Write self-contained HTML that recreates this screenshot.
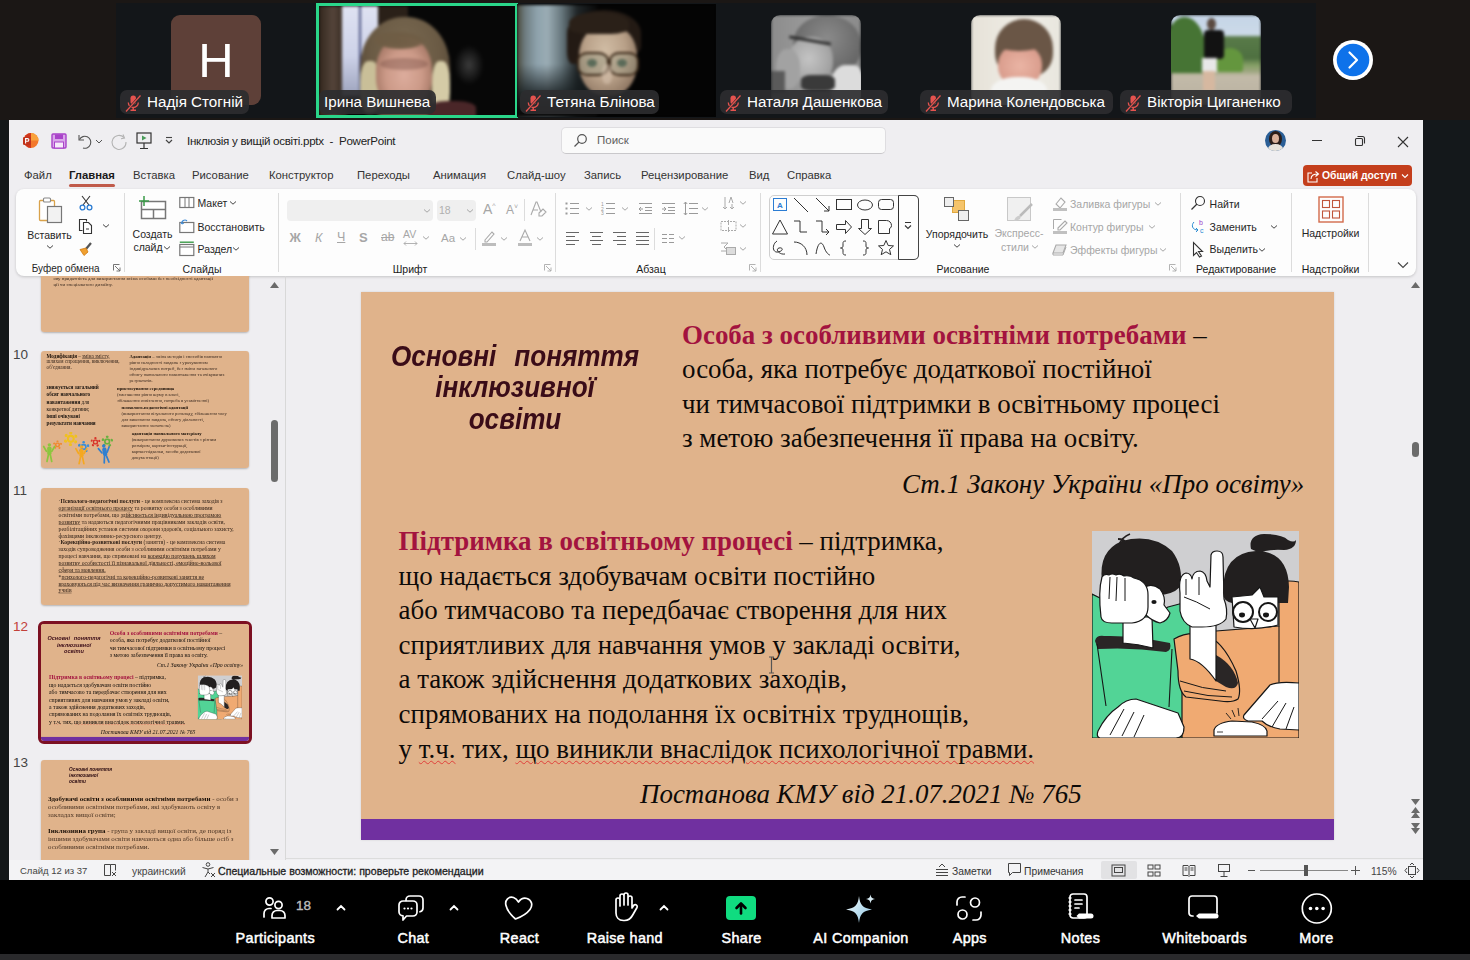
<!DOCTYPE html>
<html><head><meta charset="utf-8">
<style>
*{box-sizing:border-box;margin:0;padding:0}
html,body{width:1470px;height:960px;overflow:hidden;background:#1b1715;font-family:"Liberation Sans",sans-serif}
.a{position:absolute}
.sv{position:absolute;overflow:visible}
/* top strip */
#tiles{left:116px;top:3px;width:1200px;height:115px;background:#131619}
.tile{position:absolute;top:0;width:200px;height:115px}
.lbl{position:absolute;top:87px;height:24px;border-radius:7px;background:rgba(45,45,47,.92);color:#fff;font-size:15.2px;line-height:24px;white-space:nowrap}
.mic{position:absolute;left:4px;top:4px}
.av{position:absolute;top:12px;left:55px;width:90px;height:90px;border-radius:9px;overflow:hidden}
/* window */
#lside{left:0;top:120px;width:9px;height:760px;background:#131719}
#rside{left:1423px;top:120px;width:47px;height:760px;background:#14181b}
#win{left:9px;top:120px;width:1414px;height:760px;background:#efeef1;overflow:hidden}
.t12{font-size:12px;color:#262626;white-space:nowrap}
#zbar{left:0;top:880px;width:1470px;height:74px;background:#000}
#zstrip{left:0;top:954px;width:1470px;height:6px;background:#2a2a2c}
.zl{position:absolute;top:927px;color:#fff;font-size:14.5px;font-weight:bold;white-space:nowrap;letter-spacing:-0.1px}
.tab{top:49px;font-size:11.3px;color:#333}
.rt{white-space:nowrap;line-height:1.15}
</style></head>
<body>
<div id="tiles" class="a">
<div class="tile" style="left:0"><div class="av" style="background:#5e4038;color:#fff;font-size:49px;line-height:90px;text-align:center">H</div><div class="lbl" style="left:4px;width:129px"><svg class="mic" width="18" height="18" viewBox="0 0 18 18"><rect x="6.5" y="1.5" width="5.5" height="9" rx="2.7" fill="#e5534f"/><path d="M4.3 8.5a5 5 0 0 0 10 0" stroke="#e5534f" stroke-width="1.3" fill="none"/><path d="M9.2 13.5v2.5M6.5 16.3h5.5" stroke="#e5534f" stroke-width="1.4"/><path d="M2 17.5L16.5 1.5" stroke="#2d2d2f" stroke-width="2.6"/><path d="M2 17.5L16.5 1.5" stroke="#e5534f" stroke-width="1.2"/></svg><span style="position:absolute;left:27px">Надія Стогній</span></div></div>
<div class="tile" style="left:200px;width:202px;overflow:hidden"><div class="a" style="left:0px;top:0px;width:202px;height:115px;background:#070707"></div><div class="a" style="left:0;top:0;width:202px;height:115px;filter:blur(1.8px)"><div class="a" style="left:0px;top:0px;width:200px;height:115px;background:#070707"></div><div class="a" style="left:3px;top:3px;width:28px;height:110px;background:linear-gradient(90deg,#33271d,#54443a 50%,#2f241b)"></div><div class="a" style="left:26px;top:3px;width:40px;height:90px;background:linear-gradient(180deg,#dfe2f2 0,#cdd2e8 55%,#9ca2bc 100%)"></div><div class="a" style="left:43px;top:3px;width:1.5px;height:90px;background:#4a5282"></div><div class="a" style="left:62px;top:3px;width:30px;height:20px;background:#2a2018"></div><div class="a" style="left:138px;top:42px;width:30px;height:40px;border-radius:50%;background:radial-gradient(ellipse at 50% 50%,rgba(120,120,120,.45),transparent 70%)"></div><div class="a" style="left:44px;top:14px;width:90px;height:104px;border-radius:48% 48% 40% 40%;background:radial-gradient(ellipse at 50% 35%,#7a6a52 0,#6a5a44 55%,#5a4c3a 75%,rgba(90,76,58,0) 80%)"></div><div class="a" style="left:44px;top:58px;width:20px;height:52px;border-radius:40%;background:#c9bf98"></div><div class="a" style="left:116px;top:58px;width:18px;height:52px;border-radius:40%;background:#d4cba6"></div><div class="a" style="left:60px;top:34px;width:56px;height:70px;border-radius:46% 46% 40% 40%;background:radial-gradient(ellipse at 50% 55%,#dcac9c 0,#cc9a88 45%,#a87a68 75%,rgba(150,110,90,0) 90%)"></div><div class="a" style="left:58px;top:28px;width:52px;height:18px;border-radius:50%;background:radial-gradient(ellipse at 40% 60%,#6e5c44 0,rgba(110,92,68,.9) 55%,transparent 75%)"></div><div class="a" style="left:64px;top:55px;width:48px;height:12px;border-radius:50%;background:rgba(110,70,60,.35)"></div><div class="a" style="left:112px;top:98px;width:48px;height:17px;border-radius:40% 40% 0 0;background:#4a2628"></div></div><div class="a" style="left:0px;top:0px;width:202px;height:115px;border:3px solid #2ad68a"></div><div class="lbl" style="left:3px;width:117px"><span style="position:absolute;left:5px">Ірина Вишнева</span></div></div>
<div class="tile" style="left:401px;top:1px;width:199px;height:113px;overflow:hidden;background:#040404"><div class="a" style="left:0;top:0;width:199px;height:113px;filter:blur(1.6px)"><div class="a" style="left:0px;top:0px;width:199px;height:113px;background:#040404"></div><div class="a" style="left:0px;top:1px;width:80px;height:113px;background:linear-gradient(90deg,#4a4a3c 0,#6e7c80 10%,#8ea2ac 25%,#9aacb4 38%,#6a7a80 55%,#202628 75%,#080808 100%)"></div><div class="a" style="left:0px;top:60px;width:80px;height:53px;background:linear-gradient(180deg,rgba(20,26,28,0),rgba(20,26,28,.8) 55%,#0a0a0a 90%)"></div><div class="a" style="left:50px;top:6px;width:74px;height:46px;border-radius:50% 50% 20% 20%;background:#231a14"></div><div class="a" style="left:50px;top:30px;width:14px;height:30px;border-radius:40%;background:#231a14"></div><div class="a" style="left:62px;top:22px;width:58px;height:70px;border-radius:42% 42% 45% 45%;background:radial-gradient(ellipse at 45% 35%,#d0bca4 0,#b8a088 45%,#8a725e 80%,#6a5444 100%)"></div><div class="a" style="left:52px;top:8px;width:60px;height:22px;border-radius:50% 50% 30% 30%;background:#2a2018"></div><div class="a" style="left:60px;top:48px;width:32px;height:24px;border-radius:35%;border:2.5px solid #3a2818;background:rgba(140,150,130,.35)"></div><div class="a" style="left:92px;top:48px;width:30px;height:24px;border-radius:35%;border:2.5px solid #3a2818;background:rgba(140,150,130,.3)"></div><div class="a" style="left:70px;top:55px;width:10px;height:8px;border-radius:50%;background:#5a6a58"></div><div class="a" style="left:100px;top:55px;width:10px;height:8px;border-radius:50%;background:#5a6a58"></div><div class="a" style="left:85px;top:60px;width:10px;height:20px;border-radius:40%;background:rgba(220,200,180,.5)"></div></div></div>
<div class="tile" style="left:401px"><div class="lbl" style="left:3px;width:139px"><svg class="mic" width="18" height="18" viewBox="0 0 18 18"><rect x="6.5" y="1.5" width="5.5" height="9" rx="2.7" fill="#e5534f"/><path d="M4.3 8.5a5 5 0 0 0 10 0" stroke="#e5534f" stroke-width="1.3" fill="none"/><path d="M9.2 13.5v2.5M6.5 16.3h5.5" stroke="#e5534f" stroke-width="1.4"/><path d="M2 17.5L16.5 1.5" stroke="#2d2d2f" stroke-width="2.6"/><path d="M2 17.5L16.5 1.5" stroke="#e5534f" stroke-width="1.2"/></svg><span style="position:absolute;left:27px">Тетяна Блінова</span></div></div>
<div class="tile" style="left:600px"><div class="av"><div class="a" style="left:0;top:0;width:90px;height:90px;filter:blur(1.5px)"><div class="a" style="left:0px;top:0px;width:90px;height:90px;background:linear-gradient(90deg,#8c8c8c,#9c9c9c 50%,#8a8a8a)"></div><div class="a" style="left:22px;top:0px;width:68px;height:58px;border-radius:50% 50% 40% 45%;background:radial-gradient(ellipse at 50% 40%,#8a8a8a 0,#6e6e6e 60%,#5a5a5a 100%)"></div><div class="a" style="left:18px;top:22px;width:44px;height:48px;border-radius:45%;background:radial-gradient(ellipse at 45% 45%,#c4c4c4 0,#a8a8a8 55%,#8a8a8a 100%)"></div><div class="a" style="left:18px;top:24px;width:42px;height:3px;background:#2a2a2a;transform:rotate(10deg)"></div><div class="a" style="left:5px;top:34px;width:24px;height:40px;border-radius:45%;background:#a2a2a2"></div><div class="a" style="left:60px;top:50px;width:32px;height:42px;border-radius:45% 30% 0 0;background:#dcdcdc"></div><div class="a" style="left:30px;top:60px;width:34px;height:16px;border-radius:30%;background:#3a3a3a"></div><div class="a" style="left:0px;top:56px;width:14px;height:22px;background:#5a5a5a"></div></div></div><div class="lbl" style="left:4px;width:168px"><svg class="mic" width="18" height="18" viewBox="0 0 18 18"><rect x="6.5" y="1.5" width="5.5" height="9" rx="2.7" fill="#e5534f"/><path d="M4.3 8.5a5 5 0 0 0 10 0" stroke="#e5534f" stroke-width="1.3" fill="none"/><path d="M9.2 13.5v2.5M6.5 16.3h5.5" stroke="#e5534f" stroke-width="1.4"/><path d="M2 17.5L16.5 1.5" stroke="#2d2d2f" stroke-width="2.6"/><path d="M2 17.5L16.5 1.5" stroke="#e5534f" stroke-width="1.2"/></svg><span style="position:absolute;left:27px">Наталя Дашенкова</span></div></div>
<div class="tile" style="left:800px"><div class="av"><div class="a" style="left:0;top:0;width:90px;height:90px;filter:blur(1.5px)"><div class="a" style="left:0px;top:0px;width:90px;height:90px;background:linear-gradient(90deg,#e6e2d8,#f0ede6 60%,#e8e6de)"></div><div class="a" style="left:24px;top:4px;width:58px;height:58px;border-radius:50% 50% 40% 40%;background:#6a5646"></div><div class="a" style="left:27px;top:30px;width:44px;height:42px;border-radius:45% 45% 48% 48%;background:radial-gradient(ellipse at 50% 50%,#eab4a4 0,#dca090 60%,#c8907e 100%)"></div><div class="a" style="left:28px;top:26px;width:40px;height:10px;border-radius:50%;background:#6a5646"></div><div class="a" style="left:20px;top:62px;width:56px;height:30px;border-radius:45% 45% 0 0;background:#f4f4f2"></div></div></div><div class="lbl" style="left:4px;width:193px"><svg class="mic" width="18" height="18" viewBox="0 0 18 18"><rect x="6.5" y="1.5" width="5.5" height="9" rx="2.7" fill="#e5534f"/><path d="M4.3 8.5a5 5 0 0 0 10 0" stroke="#e5534f" stroke-width="1.3" fill="none"/><path d="M9.2 13.5v2.5M6.5 16.3h5.5" stroke="#e5534f" stroke-width="1.4"/><path d="M2 17.5L16.5 1.5" stroke="#2d2d2f" stroke-width="2.6"/><path d="M2 17.5L16.5 1.5" stroke="#e5534f" stroke-width="1.2"/></svg><span style="position:absolute;left:27px">Марина Колендовська</span></div></div>
<div class="tile" style="left:1000px"><div class="av"><div class="a" style="left:0;top:0;width:90px;height:90px;filter:blur(1.5px)"><div class="a" style="left:0px;top:0px;width:90px;height:90px;background:linear-gradient(180deg,#c4d4e6 0,#ccdae8 22%,#587a48 25%,#4e7040 48%,#86a066 56%,#9aa47c 62%,#c2baa8 68%,#b8b0a0 100%)"></div><div class="a" style="left:-4px;top:2px;width:38px;height:56px;border-radius:45% 55% 10% 10%;background:#467434"></div><div class="a" style="left:46px;top:33px;width:26px;height:24px;border-radius:50% 50% 10% 10%;background:#64963e"></div><div class="a" style="left:36px;top:3px;width:9px;height:12px;border-radius:50%;background:#5a4a40"></div><div class="a" style="left:33px;top:15px;width:20px;height:29px;border-radius:4px;background:#121212"></div><div class="a" style="left:31px;top:43px;width:15px;height:14px;background:#e8e8e8"></div><div class="a" style="left:32px;top:56px;width:12px;height:20px;background:#d6b8a0"></div></div></div><div class="lbl" style="left:4px;width:172px"><svg class="mic" width="18" height="18" viewBox="0 0 18 18"><rect x="6.5" y="1.5" width="5.5" height="9" rx="2.7" fill="#e5534f"/><path d="M4.3 8.5a5 5 0 0 0 10 0" stroke="#e5534f" stroke-width="1.3" fill="none"/><path d="M9.2 13.5v2.5M6.5 16.3h5.5" stroke="#e5534f" stroke-width="1.4"/><path d="M2 17.5L16.5 1.5" stroke="#2d2d2f" stroke-width="2.6"/><path d="M2 17.5L16.5 1.5" stroke="#e5534f" stroke-width="1.2"/></svg><span style="position:absolute;left:27px">Вікторія Циганенко</span></div></div>
</div>
<svg class="a" style="left:1332px;top:39px" width="42" height="42" viewBox="0 0 42 42"><circle cx="21" cy="21" r="20" fill="#fff"/><circle cx="21" cy="21" r="16.3" fill="#0e72ea"/><path d="M17.5 13.5l7.5 7.5-7.5 7.5" stroke="#fff" stroke-width="2.2" fill="none" stroke-linecap="round" stroke-linejoin="round"/></svg>

<div id="lside" class="a"></div>
<div id="rside" class="a"></div>
<div id="win" class="a">
 <!-- title bar -->
 <svg class="sv" style="left:13px;top:12px" width="17" height="17" viewBox="0 0 17 17"><circle cx="9" cy="8.5" r="7.5" fill="#f3782c"/><path d="M9 1a7.5 7.5 0 0 0-7.5 7.5A7.5 7.5 0 0 0 9 16z" fill="#d0361e"/><path d="M9 8.5V1a7.5 7.5 0 0 1 7.5 7.5z" fill="#f9a23c"/><rect x="1" y="5" width="8" height="8" rx="1.2" fill="#c1331c"/><path d="M3.6 11.4V6.6h1.9a1.3 1.3 0 0 1 0 2.6H3.6" stroke="#fff" stroke-width="1.1" fill="none"/></svg>
 <svg class="sv" style="left:42px;top:13px" width="16" height="16" viewBox="0 0 16 16"><rect x="1" y="1" width="14" height="14" rx="1" fill="#d9a6ea" stroke="#a943c9" stroke-width="1.4"/><rect x="4" y="1.5" width="8" height="4.5" fill="#a943c9"/><rect x="3.5" y="9" width="9" height="6" fill="#f6eafa" stroke="#a943c9" stroke-width="1"/></svg>
 <svg class="sv" style="left:67px;top:13px" width="36" height="16" viewBox="0 0 36 16"><path d="M3 2v5h5" stroke="#555" stroke-width="1.1" fill="none"/><path d="M3.5 6.5A6 6 0 1 1 7 15" stroke="#555" stroke-width="1.1" fill="none"/><path d="M20 7l3 3 3-3" stroke="#555" stroke-width="1" fill="none"/></svg>
 <svg class="sv" style="left:101px;top:12px" width="18" height="18" viewBox="0 0 18 18"><path d="M13 2.5l1.5 3.5-3.5.8" stroke="#b4b4b4" stroke-width="1.1" fill="none"/><path d="M14 5.5A7 7 0 1 0 16 10" stroke="#b4b4b4" stroke-width="1.1" fill="none"/></svg>
 <svg class="sv" style="left:127px;top:12px" width="16" height="18" viewBox="0 0 16 18"><rect x="1" y="1" width="14" height="10" fill="none" stroke="#333" stroke-width="1.2"/><path d="M6 3.5l4.5 2.5L6 8.5z" fill="#4a9c5a"/><path d="M8 11v5M4 16.5h8" stroke="#333" stroke-width="1.2"/></svg>
 <svg class="sv" style="left:155px;top:16px" width="10" height="10" viewBox="0 0 10 10"><path d="M2 1.5h6" stroke="#444" stroke-width="1.1"/><path d="M2 4l3 3 3-3" stroke="#444" stroke-width="1.2" fill="none"/></svg>
 <div class="a t12" style="left:178px;top:14px;font-size:11.6px;letter-spacing:-0.3px;color:#222">Інклюзія у вищій освіті.pptx&nbsp; - &nbsp;PowerPoint</div>
 <div class="a" style="left:552px;top:7px;width:325px;height:27px;border-radius:5px;background:#fafafa;border:1px solid #dedde0;border-bottom-color:#c9c8cb"></div>
 <svg class="sv" style="left:564px;top:13px" width="15" height="15" viewBox="0 0 15 15"><circle cx="9" cy="6" r="4.3" fill="none" stroke="#555" stroke-width="1.2"/><path d="M6 9L1.5 13.5" stroke="#555" stroke-width="1.3"/></svg>
 <div class="a t12" style="left:588px;top:14px;font-size:11.5px;color:#606060">Поиск</div>
 <div class="a" style="left:1256px;top:10px;width:21px;height:21px;border-radius:50%;overflow:hidden;background:#2a5e96"><div class="a" style="left:4px;top:1px;width:13px;height:16px;border-radius:50%;background:#2a1e1a"></div><div class="a" style="left:7px;top:4px;width:7px;height:9px;border-radius:50%;background:#d8b09a"></div><div class="a" style="left:3px;top:14px;width:15px;height:10px;border-radius:50% 50% 0 0;background:#e8e2da"></div></div>
 <div class="a" style="left:1303px;top:20px;width:10px;height:1px;background:#333"></div>
 <svg class="sv" style="left:1345px;top:15px" width="12" height="12" viewBox="0 0 12 12"><rect x="1.5" y="3.5" width="7" height="7" rx="1" fill="none" stroke="#333" stroke-width="1.1"/><path d="M3.5 1.5h5a2 2 0 0 1 2 2v5" stroke="#333" stroke-width="1.1" fill="none"/></svg>
 <svg class="sv" style="left:1388px;top:16px" width="12" height="12" viewBox="0 0 12 12"><path d="M1 1l10 10M11 1L1 11" stroke="#333" stroke-width="1.1"/></svg>
 <!-- tabs -->
 <div class="a t12 tab" style="left:15px">Файл</div>
 <div class="a t12 tab" style="left:60px;font-weight:bold;color:#1a1a1a">Главная</div>
 <div class="a" style="left:60px;top:64px;width:46px;height:2.5px;border-radius:2px;background:#c05a4a"></div>
 <div class="a t12 tab" style="left:124px">Вставка</div>
 <div class="a t12 tab" style="left:183px">Рисование</div>
 <div class="a t12 tab" style="left:260px">Конструктор</div>
 <div class="a t12 tab" style="left:348px">Переходы</div>
 <div class="a t12 tab" style="left:424px">Анимация</div>
 <div class="a t12 tab" style="left:498px">Слайд-шоу</div>
 <div class="a t12 tab" style="left:575px">Запись</div>
 <div class="a t12 tab" style="left:632px">Рецензирование</div>
 <div class="a t12 tab" style="left:740px">Вид</div>
 <div class="a t12 tab" style="left:778px">Справка</div>
 <div class="a" style="left:1294px;top:45px;width:109px;height:21px;border-radius:4px;background:#c43e1c"></div>
 <svg class="sv" style="left:1297px;top:50px" width="14" height="13" viewBox="0 0 14 13"><path d="M6 3H2v9h9V8" stroke="#fff" stroke-width="1.1" fill="none"/><path d="M5 9c0-4 3-5 7-5M9.5 1.5L12.5 4 9.5 6.5" stroke="#fff" stroke-width="1.1" fill="none"/></svg>
 <div class="a t12" style="left:1313px;top:50px;color:#fff;font-weight:bold;font-size:10.4px">Общий доступ</div>
 <svg class="sv" style="left:1392px;top:53px" width="8" height="6" viewBox="0 0 8 6"><path d="M1 1.5l3 3 3-3" stroke="#fff" stroke-width="1.1" fill="none"/></svg>
 <!-- ribbon -->
 <div id="ribbon" class="a" style="left:7px;top:69px;width:1400px;height:87px;border-radius:8px;background:#fdfdfd;box-shadow:0 1px 3px rgba(0,0,0,.18)"></div>
<svg class="sv" style="left:28.0px;top:76.0px" width="28" height="28" viewBox="0 0 28 28"><rect x="2.5" y="4.5" width="15" height="20" rx="1" fill="#fff" stroke="#d9a24a" stroke-width="1.3"/><rect x="6.5" y="2" width="7" height="4" rx="1" fill="#fff" stroke="#888" stroke-width="1.1"/><rect x="10.5" y="10.5" width="14" height="16" fill="#f2f2f2" stroke="#777" stroke-width="1.2"/></svg>
<div class="a rt" style="left:10.5px;top:108.5px;width:60px;text-align:center;font-size:10.5px;color:#262626;">Вставить</div>
<svg class="sv" style="left:36.5px;top:124.0px" width="8" height="6" viewBox="0 0 8 6"><path d="M1 1.5l3 2.7 3 -2.7" stroke="#444" stroke-width="1" fill="none"/></svg>
<svg class="sv" style="left:70.0px;top:75.0px" width="14" height="16" viewBox="0 0 14 16"><path d="M3 1l7 9M11 1L4 10" stroke="#333" stroke-width="1.1"/><circle cx="3.5" cy="12.5" r="2.4" fill="none" stroke="#2b7cd3" stroke-width="1.3"/><circle cx="10.5" cy="12.5" r="2.4" fill="none" stroke="#2b7cd3" stroke-width="1.3"/></svg>
<svg class="sv" style="left:69.0px;top:98.0px" width="16" height="16" viewBox="0 0 16 16"><path d="M4.5 12.5h-3v-11h7v2" stroke="#333" stroke-width="1.1" fill="none"/><path d="M5.5 4.5h5l3 3v8h-8z" fill="#fff" stroke="#333" stroke-width="1.1"/><path d="M8 11h3" stroke="#333"/></svg>
<svg class="sv" style="left:93.0px;top:103.0px" width="8" height="6" viewBox="0 0 8 6"><path d="M1 1.5l3 2.7 3 -2.7" stroke="#444" stroke-width="1" fill="none"/></svg>
<svg class="sv" style="left:69.0px;top:120.0px" width="16" height="16" viewBox="0 0 16 16"><path d="M8 9l5-6" stroke="#555" stroke-width="2.2"/><path d="M2 9.5l6-1.5 2 4-4 3.5z" fill="#f0a030" stroke="#d07a10" stroke-width="0.8"/></svg>
<div class="a rt" style="left:22.7px;top:142.8px;font-size:10px;color:#262626;">Буфер обмена</div>
<svg class="sv" style="left:103.0px;top:143.0px" width="10" height="10" viewBox="0 0 10 10"><path d="M1.5 7.5V1.5H7.5" stroke="#666" stroke-width="0.9" fill="none"/><path d="M3 3l5 5M8 4.5V8H4.5" stroke="#666" stroke-width="0.9" fill="none"/></svg>
<div class="a" style="left:115.3px;top:73px;width:1px;height:79px;background:#dcdcdc"></div>
<svg class="sv" style="left:128.0px;top:75.0px" width="30" height="26" viewBox="0 0 30 26"><rect x="4.5" y="6.5" width="24" height="17" fill="#fff" stroke="#777" stroke-width="1.5"/><path d="M4.5 14.5h24M16.5 14.5v9" stroke="#777" stroke-width="1.5"/><path d="M7 1v10M2 6h10" stroke="#3a9a48" stroke-width="1.5"/></svg>
<div class="a rt" style="left:113.5px;top:107.6px;width:60px;text-align:center;font-size:10.5px;color:#262626;">Создать</div>
<div class="a rt" style="left:109.0px;top:121.4px;width:60px;text-align:center;font-size:10.5px;color:#262626;">слайд</div>
<svg class="sv" style="left:154.0px;top:124.5px" width="8" height="6" viewBox="0 0 8 6"><path d="M1 1.5l3 2.7 3 -2.7" stroke="#444" stroke-width="1" fill="none"/></svg>
<svg class="sv" style="left:170.0px;top:76.0px" width="16" height="14" viewBox="0 0 16 14"><rect x="0.8" y="1.5" width="14" height="10" fill="#fff" stroke="#777" stroke-width="1.2"/><path d="M6 1.5v10M10 1.5v10" stroke="#777"/></svg>
<div class="a rt" style="left:188.5px;top:76.9px;font-size:10.5px;color:#262626;">Макет</div>
<svg class="sv" style="left:220.0px;top:80.0px" width="8" height="6" viewBox="0 0 8 6"><path d="M1 1.5l3 2.7 3 -2.7" stroke="#444" stroke-width="1" fill="none"/></svg>
<svg class="sv" style="left:170.0px;top:99.0px" width="16" height="15" viewBox="0 0 16 15"><rect x="0.8" y="3.5" width="14" height="10" fill="#fff" stroke="#777" stroke-width="1.2"/><path d="M3 5a3 3 0 0 1 5-3" stroke="#3d8ad6" stroke-width="1.1" fill="none"/><path d="M2 3l1 2 2-1" stroke="#3d8ad6" fill="none"/></svg>
<div class="a rt" style="left:188.5px;top:100.9px;font-size:10.5px;color:#262626;">Восстановить</div>
<svg class="sv" style="left:170.0px;top:121.0px" width="16" height="16" viewBox="0 0 16 16"><rect x="0.8" y="3.5" width="14" height="11" fill="#fff" stroke="#777" stroke-width="1.2"/><path d="M0.8 1.2h14" stroke="#3a9a48" stroke-width="1.4"/><path d="M0.8 6h14" stroke="#777"/></svg>
<div class="a rt" style="left:188.5px;top:122.9px;font-size:10.5px;color:#262626;">Раздел</div>
<svg class="sv" style="left:223.0px;top:126.0px" width="8" height="6" viewBox="0 0 8 6"><path d="M1 1.5l3 2.7 3 -2.7" stroke="#444" stroke-width="1" fill="none"/></svg>
<div class="a rt" style="left:163.0px;top:142.5px;width:60px;text-align:center;font-size:10.5px;color:#262626;">Слайды</div>
<div class="a" style="left:269.0px;top:73px;width:1px;height:79px;background:#dcdcdc"></div>
<div class="a" style="left:277.8px;top:80px;width:146px;height:20.5px;border-radius:4px;background:#efefef"></div>
<div class="a" style="left:427.7px;top:80px;width:39.5px;height:20.5px;border-radius:4px;background:#efefef"></div>
<svg class="sv" style="left:414.0px;top:87.5px" width="8" height="6" viewBox="0 0 8 6"><path d="M1 1.5l3 2.7 3 -2.7" stroke="#a6a6a6" stroke-width="1" fill="none"/></svg>
<svg class="sv" style="left:457.0px;top:87.5px" width="8" height="6" viewBox="0 0 8 6"><path d="M1 1.5l3 2.7 3 -2.7" stroke="#a6a6a6" stroke-width="1" fill="none"/></svg>
<div class="a rt" style="left:430.0px;top:84.4px;font-size:10.5px;color:#b0b0b0;">18</div>
<div class="a rt" style="left:474.0px;top:80.9px;font-size:14px;color:#a6a6a6;">A<sup style="font-size:7px">^</sup></div>
<div class="a rt" style="left:497.0px;top:83.0px;font-size:12px;color:#a6a6a6;">A<sup style="font-size:7px">˅</sup></div>
<div class="a" style="left:515.0px;top:79px;width:1px;height:22px;background:#dcdcdc"></div>
<svg class="sv" style="left:520.0px;top:80.0px" width="18" height="18" viewBox="0 0 18 18"><path d="M2 15L7 2h1l4 10M4 10h5" stroke="#aaa" stroke-width="1.1" fill="none"/><path d="M10 13l4-4 3 3-4 4h-3z" fill="none" stroke="#aaa" stroke-width="1.1"/></svg>
<div class="a rt" style="left:280.5px;top:110.8px;font-size:12.5px;color:#a6a6a6;"><b>Ж</b></div>
<div class="a rt" style="left:306.0px;top:110.8px;font-size:12.5px;color:#a6a6a6;"><i>К</i></div>
<div class="a rt" style="left:328.0px;top:109.8px;font-size:12.5px;color:#a6a6a6;"><u>Ч</u></div>
<div class="a rt" style="left:350.0px;top:110.5px;font-size:13px;color:#a6a6a6;"><b>S</b></div>
<div class="a rt" style="left:372.0px;top:111.0px;font-size:12px;color:#a6a6a6;"><s>ab</s></div>
<div class="a rt" style="left:394.0px;top:107.9px;font-size:10.5px;color:#a6a6a6;">AV</div>
<svg class="sv" style="left:394.0px;top:120.0px" width="15" height="7" viewBox="0 0 15 7"><path d="M1 3.5h13M3 1.5l-2 2 2 2M12 1.5l2 2-2 2" stroke="#aaa" stroke-width="0.9" fill="none"/></svg>
<svg class="sv" style="left:413.0px;top:115.0px" width="8" height="6" viewBox="0 0 8 6"><path d="M1 1.5l3 2.7 3 -2.7" stroke="#a6a6a6" stroke-width="1" fill="none"/></svg>
<div class="a rt" style="left:432.0px;top:112.3px;font-size:11.5px;color:#a6a6a6;">Aa</div>
<svg class="sv" style="left:450.0px;top:116.0px" width="8" height="6" viewBox="0 0 8 6"><path d="M1 1.5l3 2.7 3 -2.7" stroke="#a6a6a6" stroke-width="1" fill="none"/></svg>
<div class="a" style="left:466.0px;top:108px;width:1px;height:22px;background:#dcdcdc"></div>
<svg class="sv" style="left:472.0px;top:109.0px" width="16" height="18" viewBox="0 0 16 18"><path d="M4 11l7-8 2 2-7 8H4z" fill="none" stroke="#aaa" stroke-width="1.1"/><rect x="1" y="14" width="14" height="3" fill="#bdbdbd"/></svg>
<svg class="sv" style="left:491.0px;top:116.0px" width="8" height="6" viewBox="0 0 8 6"><path d="M1 1.5l3 2.7 3 -2.7" stroke="#a6a6a6" stroke-width="1" fill="none"/></svg>
<svg class="sv" style="left:508.0px;top:109.0px" width="16" height="18" viewBox="0 0 16 18"><path d="M3 12L8 1l5 11M5 8h6" stroke="#aaa" stroke-width="1.1" fill="none"/><rect x="1" y="14" width="14" height="3" fill="#bdbdbd"/></svg>
<svg class="sv" style="left:527.0px;top:116.0px" width="8" height="6" viewBox="0 0 8 6"><path d="M1 1.5l3 2.7 3 -2.7" stroke="#a6a6a6" stroke-width="1" fill="none"/></svg>
<div class="a rt" style="left:371.0px;top:142.7px;width:60px;text-align:center;font-size:10.5px;color:#1a1a1a;">Шрифт</div>
<svg class="sv" style="left:534.0px;top:143.0px" width="10" height="10" viewBox="0 0 10 10"><path d="M1.5 7.5V1.5H7.5" stroke="#aaa" stroke-width="0.9" fill="none"/><path d="M3 3l5 5M8 4.5V8H4.5" stroke="#aaa" stroke-width="0.9" fill="none"/></svg>
<div class="a" style="left:545.5px;top:73px;width:1px;height:79px;background:#dcdcdc"></div>
<svg class="sv" style="left:556.0px;top:82.0px" width="15" height="13" viewBox="0 0 15 13"><rect x="0.5" y="0.5" width="2" height="2" fill="#9a9a9a"/><rect x="0.5" y="5.5" width="2" height="2" fill="#9a9a9a"/><rect x="0.5" y="10.5" width="2" height="2" fill="#9a9a9a"/><path d="M5 1.5h9M5 6.5h9M5 11.5h9" stroke="#9a9a9a"/></svg>
<svg class="sv" style="left:576.0px;top:86.0px" width="8" height="6" viewBox="0 0 8 6"><path d="M1 1.5l3 2.7 3 -2.7" stroke="#a6a6a6" stroke-width="1" fill="none"/></svg>
<svg class="sv" style="left:592.0px;top:81.0px" width="15" height="14" viewBox="0 0 15 14"><text x="0" y="5" font-size="5" fill="#9a9a9a" font-family="Liberation Sans">1</text><text x="0" y="10" font-size="5" fill="#9a9a9a" font-family="Liberation Sans">2</text><text x="0" y="14" font-size="5" fill="#9a9a9a" font-family="Liberation Sans">3</text><path d="M5 2.5h9M5 7.5h9M5 12.5h9" stroke="#9a9a9a"/></svg>
<svg class="sv" style="left:612.0px;top:86.0px" width="8" height="6" viewBox="0 0 8 6"><path d="M1 1.5l3 2.7 3 -2.7" stroke="#a6a6a6" stroke-width="1" fill="none"/></svg>
<svg class="sv" style="left:629.0px;top:82.0px" width="15" height="13" viewBox="0 0 15 13"><path d="M1 1.5h13M7 5.5h7M7 8.5h7M1 11.5h13" stroke="#9a9a9a"/><path d="M5 7H1.5M3 5L1 7l2 2" stroke="#9a9a9a" fill="none"/></svg>
<svg class="sv" style="left:652.0px;top:82.0px" width="15" height="13" viewBox="0 0 15 13"><path d="M1 1.5h13M7 5.5h7M7 8.5h7M1 11.5h13" stroke="#9a9a9a"/><path d="M1 7h3.5M3 5l2 2-2 2" stroke="#9a9a9a" fill="none"/></svg>
<svg class="sv" style="left:674.0px;top:81.0px" width="16" height="15" viewBox="0 0 16 15"><path d="M6 2.5h9M6 7.5h9M6 12.5h9" stroke="#9a9a9a"/><path d="M2.5 1v13M0.8 3l1.7-2 1.7 2M0.8 12l1.7 2 1.7-2" stroke="#9a9a9a" fill="none"/></svg>
<svg class="sv" style="left:692.0px;top:86.0px" width="8" height="6" viewBox="0 0 8 6"><path d="M1 1.5l3 2.7 3 -2.7" stroke="#a6a6a6" stroke-width="1" fill="none"/></svg>
<svg class="sv" style="left:713.0px;top:76.0px" width="14" height="15" viewBox="0 0 14 15"><path d="M3 1v12M1 11l2 2 2-2M10 8v5M8 11l2 2 2-2" stroke="#aaa" fill="none"/><path d="M7 7l2-6 2 6" stroke="#aaa" fill="none"/></svg>
<svg class="sv" style="left:730.0px;top:80.0px" width="8" height="6" viewBox="0 0 8 6"><path d="M1 1.5l3 2.7 3 -2.7" stroke="#a6a6a6" stroke-width="1" fill="none"/></svg>
<svg class="sv" style="left:711.0px;top:99.0px" width="17" height="14" viewBox="0 0 17 14"><rect x="1" y="2.5" width="15" height="9" fill="none" stroke="#aaa" stroke-dasharray="2 1"/><path d="M8.5 1v5M8.5 8v5" stroke="#aaa"/></svg>
<svg class="sv" style="left:730.0px;top:103.0px" width="8" height="6" viewBox="0 0 8 6"><path d="M1 1.5l3 2.7 3 -2.7" stroke="#a6a6a6" stroke-width="1" fill="none"/></svg>
<svg class="sv" style="left:711.0px;top:122.0px" width="17" height="13" viewBox="0 0 17 13"><path d="M1 1h7l-4 4 4 4H1" stroke="#aaa" fill="none"/><rect x="6.5" y="5.5" width="9" height="7" fill="#ddd" stroke="#aaa"/></svg>
<svg class="sv" style="left:730.0px;top:126.0px" width="8" height="6" viewBox="0 0 8 6"><path d="M1 1.5l3 2.7 3 -2.7" stroke="#a6a6a6" stroke-width="1" fill="none"/></svg>
<svg class="sv" style="left:557.0px;top:112.0px" width="14" height="14" viewBox="0 0 14 14"><path d="M0 0.5H13" stroke="#666" stroke-width="1"/><path d="M0 4.5H9" stroke="#666" stroke-width="1"/><path d="M0 8.5H13" stroke="#666" stroke-width="1"/><path d="M0 12.5H9" stroke="#666" stroke-width="1"/></svg>
<svg class="sv" style="left:581.0px;top:112.0px" width="14" height="14" viewBox="0 0 14 14"><path d="M0 0.5H13" stroke="#666" stroke-width="1"/><path d="M2 4.5H11" stroke="#666" stroke-width="1"/><path d="M0 8.5H13" stroke="#666" stroke-width="1"/><path d="M2 12.5H11" stroke="#666" stroke-width="1"/></svg>
<svg class="sv" style="left:604.0px;top:112.0px" width="14" height="14" viewBox="0 0 14 14"><path d="M0 0.5H13" stroke="#666" stroke-width="1"/><path d="M4 4.5H13" stroke="#666" stroke-width="1"/><path d="M0 8.5H13" stroke="#666" stroke-width="1"/><path d="M4 12.5H13" stroke="#666" stroke-width="1"/></svg>
<svg class="sv" style="left:627.0px;top:112.0px" width="14" height="14" viewBox="0 0 14 14"><path d="M0 0.5H13" stroke="#666" stroke-width="1"/><path d="M0 4.5H13" stroke="#666" stroke-width="1"/><path d="M0 8.5H13" stroke="#666" stroke-width="1"/><path d="M0 12.5H13" stroke="#666" stroke-width="1"/></svg>
<div class="a" style="left:645.0px;top:108px;width:1px;height:22px;background:#dcdcdc"></div>
<svg class="sv" style="left:653.0px;top:113.0px" width="12" height="11" viewBox="0 0 12 11"><path d="M0 1.5h5M7 1.5h5M0 5.5h5M7 5.5h5M0 9.5h5M7 9.5h5" stroke="#9a9a9a"/></svg>
<svg class="sv" style="left:669.0px;top:115.0px" width="8" height="6" viewBox="0 0 8 6"><path d="M1 1.5l3 2.7 3 -2.7" stroke="#a6a6a6" stroke-width="1" fill="none"/></svg>
<div class="a rt" style="left:612.0px;top:142.5px;width:60px;text-align:center;font-size:10.5px;color:#1a1a1a;">Абзац</div>
<svg class="sv" style="left:739.0px;top:143.0px" width="10" height="10" viewBox="0 0 10 10"><path d="M1.5 7.5V1.5H7.5" stroke="#aaa" stroke-width="0.9" fill="none"/><path d="M3 3l5 5M8 4.5V8H4.5" stroke="#aaa" stroke-width="0.9" fill="none"/></svg>
<div class="a" style="left:750.7px;top:73px;width:1px;height:79px;background:#dcdcdc"></div>
<div class="a" style="left:759.5px;top:74.5px;width:150px;height:65px;border:1px solid #cfcfcf;border-radius:5px"></div>
<div class="a" style="left:889px;top:74.5px;width:20.5px;height:65px;border:1px solid #444;border-left-color:#333;border-radius:0 5px 5px 0"></div>
<svg class="sv" style="left:762.0px;top:76.0px" width="18" height="18" viewBox="0 0 18 18"><rect x="2.5" y="2.5" width="13" height="12" fill="none" stroke="#2b7cd3" stroke-width="1"/><text x="9" y="12" font-size="8" text-anchor="middle" fill="#2b7cd3" font-weight="bold" font-family="Liberation Sans">A</text></svg>
<svg class="sv" style="left:783.0px;top:76.0px" width="18" height="18" viewBox="0 0 18 18"><path d="M2 2l14 14" stroke="#333" stroke-width="1" fill="none"/></svg>
<svg class="sv" style="left:805.0px;top:76.0px" width="18" height="18" viewBox="0 0 18 18"><path d="M2 2l13 13M15 10v5h-5" stroke="#333" stroke-width="1" fill="none"/></svg>
<svg class="sv" style="left:826.0px;top:76.0px" width="18" height="18" viewBox="0 0 18 18"><rect x="1.5" y="3.5" width="15" height="10" stroke="#333" stroke-width="1" fill="none"/></svg>
<svg class="sv" style="left:847.0px;top:76.0px" width="18" height="18" viewBox="0 0 18 18"><ellipse cx="9" cy="9" rx="7.5" ry="5" stroke="#333" stroke-width="1" fill="none"/></svg>
<svg class="sv" style="left:868.0px;top:76.0px" width="18" height="18" viewBox="0 0 18 18"><rect x="1.5" y="3.5" width="15" height="10" rx="3" stroke="#333" stroke-width="1" fill="none"/></svg>
<svg class="sv" style="left:762.0px;top:98.0px" width="18" height="18" viewBox="0 0 18 18"><path d="M9 2L1.5 16h15z" stroke="#333" stroke-width="1" fill="none"/></svg>
<svg class="sv" style="left:783.0px;top:98.0px" width="18" height="18" viewBox="0 0 18 18"><path d="M2 3h6v11h7" stroke="#333" stroke-width="1" fill="none"/></svg>
<svg class="sv" style="left:805.0px;top:98.0px" width="18" height="18" viewBox="0 0 18 18"><path d="M2 3h6v11h7M12 11l3 3-3 3" stroke="#333" stroke-width="1" fill="none"/></svg>
<svg class="sv" style="left:826.0px;top:98.0px" width="18" height="18" viewBox="0 0 18 18"><path d="M1.5 6.5h9v-4l6 6.5-6 6.5v-4h-9z" stroke="#333" stroke-width="1" fill="none"/></svg>
<svg class="sv" style="left:847.0px;top:98.0px" width="18" height="18" viewBox="0 0 18 18"><path d="M5.5 1.5h7v9h3l-6.5 6-6.5-6h3z" stroke="#333" stroke-width="1" fill="none"/></svg>
<svg class="sv" style="left:868.0px;top:98.0px" width="18" height="18" viewBox="0 0 18 18"><path d="M1.5 15.5v-13h8a5 5 0 0 1 5 5 3 3 0 0 1-2 3v5z" stroke="#333" stroke-width="1" fill="none"/></svg>
<svg class="sv" style="left:762.0px;top:119.0px" width="18" height="18" viewBox="0 0 18 18"><path d="M6 2c-5 3-5 12 1 11s5-5 1-4 0 7 6 6" stroke="#333" stroke-width="1" fill="none"/></svg>
<svg class="sv" style="left:783.0px;top:119.0px" width="18" height="18" viewBox="0 0 18 18"><path d="M2 3c7 0 13 5 13 13" stroke="#333" stroke-width="1" fill="none"/></svg>
<svg class="sv" style="left:805.0px;top:119.0px" width="18" height="18" viewBox="0 0 18 18"><path d="M2 15C4 2 8 2 10 8s5 8 6 8" stroke="#333" stroke-width="1" fill="none"/></svg>
<svg class="sv" style="left:826.0px;top:119.0px" width="18" height="18" viewBox="0 0 18 18"><path d="M11 2c-3 0-3 1-3 3v2c0 1.5-1 2-2.5 2 1.5 0 2.5.5 2.5 2v2c0 2 0 3 3 3" stroke="#333" stroke-width="1" fill="none"/></svg>
<svg class="sv" style="left:847.0px;top:119.0px" width="18" height="18" viewBox="0 0 18 18"><path d="M7 2c3 0 3 1 3 3v2c0 1.5 1 2 2.5 2-1.5 0-2.5.5-2.5 2v2c0 2 0 3-3 3" stroke="#333" stroke-width="1" fill="none"/></svg>
<svg class="sv" style="left:868.0px;top:119.0px" width="18" height="18" viewBox="0 0 18 18"><path d="M9 1.5l2.2 5 5.3.4-4 3.5 1.3 5.3L9 12.8l-4.8 2.9 1.3-5.3-4-3.5 5.3-.4z" stroke="#333" stroke-width="1" fill="none"/></svg>
<svg class="sv" style="left:894.0px;top:101.0px" width="10" height="10" viewBox="0 0 10 10"><path d="M2 1.5h6" stroke="#333" stroke-width="1"/><path d="M2 4.5l3 3 3-3" stroke="#333" stroke-width="1.1" fill="none"/></svg>
<svg class="sv" style="left:934.0px;top:76.0px" width="28" height="26" viewBox="0 0 28 26"><rect x="9.5" y="4.5" width="12" height="12" fill="#f5c46b" stroke="#e0a83e"/><rect x="1.5" y="1.5" width="9" height="9" fill="#eee" stroke="#666"/><rect x="15.5" y="14.5" width="10" height="10" fill="#eee" stroke="#666"/></svg>
<div class="a rt" style="left:908.0px;top:107.5px;width:80px;text-align:center;font-size:10.5px;color:#262626;">Упорядочить</div>
<svg class="sv" style="left:944.0px;top:123.0px" width="8" height="6" viewBox="0 0 8 6"><path d="M1 1.5l3 2.7 3 -2.7" stroke="#444" stroke-width="1" fill="none"/></svg>
<svg class="sv" style="left:997.0px;top:76.0px" width="28" height="27" viewBox="0 0 28 27"><rect x="1.5" y="1.5" width="23" height="23" fill="#f0f0f0" stroke="#c8c8c8"/><path d="M26 8L14 20" stroke="#bbb" stroke-width="2.5"/><path d="M8 25c1-4 4-6 7-5l-1 3c-2 1-4 2-6 2z" fill="#ccc"/></svg>
<div class="a rt" style="left:975.0px;top:106.9px;width:70px;text-align:center;font-size:10.5px;color:#a6a6a6;">Экспресс-</div>
<div class="a rt" style="left:971.0px;top:120.9px;width:70px;text-align:center;font-size:10.5px;color:#a6a6a6;">стили</div>
<svg class="sv" style="left:1022.0px;top:124.0px" width="8" height="6" viewBox="0 0 8 6"><path d="M1 1.5l3 2.7 3 -2.7" stroke="#a6a6a6" stroke-width="1" fill="none"/></svg>
<svg class="sv" style="left:1043.0px;top:75.0px" width="17" height="17" viewBox="0 0 17 17"><path d="M4 9l5-6 4 4-5 6z" fill="none" stroke="#aaa" stroke-width="1.1"/><rect x="1" y="13" width="14" height="3" fill="#c0c0c0"/></svg>
<div class="a rt" style="left:1061.0px;top:77.9px;font-size:10.5px;color:#a6a6a6;">Заливка фигуры</div>
<svg class="sv" style="left:1145.0px;top:81.0px" width="8" height="6" viewBox="0 0 8 6"><path d="M1 1.5l3 2.7 3 -2.7" stroke="#a6a6a6" stroke-width="1" fill="none"/></svg>
<svg class="sv" style="left:1043.0px;top:98.0px" width="17" height="17" viewBox="0 0 17 17"><path d="M1.5 11V1.5h8" stroke="#aaa" fill="none"/><path d="M6 10l7-7 2 2-7 7H6z" fill="none" stroke="#aaa" stroke-width="1.1"/><rect x="1" y="13" width="14" height="3" fill="#c0c0c0"/></svg>
<div class="a rt" style="left:1061.0px;top:100.9px;font-size:10.5px;color:#a6a6a6;">Контур фигуры</div>
<svg class="sv" style="left:1139.0px;top:104.0px" width="8" height="6" viewBox="0 0 8 6"><path d="M1 1.5l3 2.7 3 -2.7" stroke="#a6a6a6" stroke-width="1" fill="none"/></svg>
<svg class="sv" style="left:1043.0px;top:122.0px" width="17" height="15" viewBox="0 0 17 15"><path d="M4 3h10l-3 8H1z" fill="#e6e6e6" stroke="#aaa" stroke-width="1.1"/><path d="M1 11v2h10l3-8" stroke="#aaa" fill="none"/></svg>
<div class="a rt" style="left:1061.0px;top:123.9px;font-size:10.5px;color:#a6a6a6;">Эффекты фигуры</div>
<svg class="sv" style="left:1150.0px;top:127.0px" width="8" height="6" viewBox="0 0 8 6"><path d="M1 1.5l3 2.7 3 -2.7" stroke="#a6a6a6" stroke-width="1" fill="none"/></svg>
<div class="a rt" style="left:914.0px;top:142.5px;width:80px;text-align:center;font-size:10.5px;color:#1a1a1a;">Рисование</div>
<svg class="sv" style="left:1159.0px;top:143.0px" width="10" height="10" viewBox="0 0 10 10"><path d="M1.5 7.5V1.5H7.5" stroke="#aaa" stroke-width="0.9" fill="none"/><path d="M3 3l5 5M8 4.5V8H4.5" stroke="#aaa" stroke-width="0.9" fill="none"/></svg>
<div class="a" style="left:1171.0px;top:73px;width:1px;height:79px;background:#dcdcdc"></div>
<svg class="sv" style="left:1181.0px;top:75.0px" width="16" height="16" viewBox="0 0 16 16"><circle cx="10" cy="6" r="4.5" fill="none" stroke="#333" stroke-width="1.1"/><path d="M7 9l-5.5 5.5" stroke="#333" stroke-width="1.2"/></svg>
<div class="a rt" style="left:1200.6px;top:77.5px;font-size:10.5px;color:#262626;">Найти</div>
<svg class="sv" style="left:1181.0px;top:98.0px" width="17" height="17" viewBox="0 0 17 17"><text x="9" y="7" font-size="7" fill="#a03cc8" font-family="Liberation Sans">b</text><text x="10" y="15" font-size="7" fill="#2b8cd3" font-family="Liberation Sans">c</text><path d="M4 4c-3 3-2 8 4 8M6 10l2 2-2 2" stroke="#2b8cd3" fill="none"/></svg>
<div class="a rt" style="left:1200.6px;top:100.9px;font-size:10.5px;color:#262626;">Заменить</div>
<svg class="sv" style="left:1261.0px;top:104.0px" width="8" height="6" viewBox="0 0 8 6"><path d="M1 1.5l3 2.7 3 -2.7" stroke="#444" stroke-width="1" fill="none"/></svg>
<svg class="sv" style="left:1183.0px;top:121.0px" width="14" height="17" viewBox="0 0 14 17"><path d="M1.5 1.5v13l3-3 3 4.5 2-1-3-4.5h4z" fill="none" stroke="#333" stroke-width="1.1"/></svg>
<div class="a rt" style="left:1200.6px;top:123.4px;font-size:10.5px;color:#262626;">Выделить</div>
<svg class="sv" style="left:1249.0px;top:126.5px" width="8" height="6" viewBox="0 0 8 6"><path d="M1 1.5l3 2.7 3 -2.7" stroke="#444" stroke-width="1" fill="none"/></svg>
<div class="a rt" style="left:1177.0px;top:142.5px;width:100px;text-align:center;font-size:10.5px;color:#1a1a1a;">Редактирование</div>
<div class="a" style="left:1282.4px;top:73px;width:1px;height:79px;background:#dcdcdc"></div>
<svg class="sv" style="left:1309.0px;top:76.0px" width="26" height="27" viewBox="0 0 26 27"><rect x="1" y="1" width="24" height="25" fill="none" stroke="#d26a4a" stroke-width="1.4"/><rect x="4.5" y="4.5" width="7" height="7" fill="none" stroke="#c0553a" stroke-width="1.1"/><rect x="14.5" y="4.5" width="7" height="7" fill="none" stroke="#c0553a" stroke-width="1.1"/><rect x="4.5" y="15" width="7" height="7" fill="none" stroke="#c0553a" stroke-width="1.1"/><rect x="14.5" y="15" width="7" height="7" fill="none" stroke="#c0553a" stroke-width="1.1"/></svg>
<div class="a rt" style="left:1281.5px;top:107.4px;width:80px;text-align:center;font-size:10.5px;color:#262626;">Надстройки</div>
<div class="a rt" style="left:1281.5px;top:142.5px;width:80px;text-align:center;font-size:10.5px;color:#1a1a1a;">Надстройки</div>
<div class="a" style="left:1359.4px;top:73px;width:1px;height:79px;background:#dcdcdc"></div>
<svg class="sv" style="left:1388.0px;top:141.0px" width="12" height="8" viewBox="0 0 12 8"><path d="M1 1.5l5 5 5-5" stroke="#444" stroke-width="1.1" fill="none"/></svg>
<div class="a" style="left:0;top:156px;width:276px;height:584px;overflow:hidden">
<div class="a" style="left:31.5px;top:-60.6px;width:208.5px;height:117px;border-radius:4px;box-shadow:0 1px 2px rgba(0,0,0,.25)"></div>
<div class="a" style="left:31.5px;top:-60.6px;width:208.5px;height:117px;border-radius:3px;overflow:hidden;background:#e0b38b"><div style="position:absolute;left:0;top:0;width:973px;height:548px;transform:scale(0.21429);transform-origin:0 0"><div style="font-family:'Liberation Serif',serif;color:#2a1c14;white-space:nowrap;position:absolute;left:58px;top:283px;font-size:23px;color:#3a2a20">ову придатність для використання всіма особами без необхідності адаптації</div><div style="font-family:'Liberation Serif',serif;color:#2a1c14;white-space:nowrap;position:absolute;left:58px;top:313px;font-size:23px;color:#3a2a20">ції чи спеціального дизайну.</div></div></div>
<div class="a" style="left:31.5px;top:75.4px;width:208.5px;height:117px;border-radius:4px;box-shadow:0 1px 2px rgba(0,0,0,.25)"></div>
<div class="a" style="left:31.5px;top:75.4px;width:208.5px;height:117px;border-radius:3px;overflow:hidden;background:#e0b38b"><div style="position:absolute;left:0;top:0;width:973px;height:548px;transform:scale(0.21429);transform-origin:0 0"><div style="font-family:'Liberation Serif',serif;color:#2a1c14;white-space:nowrap;position:absolute;left:26px;top:10px;font-size:24px;color:#3a2a20"><b style="color:#1a1008">Модифікація</b> – <u>зміна змісту,</u></div><div style="font-family:'Liberation Serif',serif;color:#2a1c14;white-space:nowrap;position:absolute;left:26px;top:36px;font-size:24px;color:#3a2a20">шляхом спрощення, виключення,</div><div style="font-family:'Liberation Serif',serif;color:#2a1c14;white-space:nowrap;position:absolute;left:26px;top:62px;font-size:24px;color:#3a2a20">об'єднання.</div><div style="font-family:'Liberation Serif',serif;color:#2a1c14;white-space:nowrap;position:absolute;left:413px;top:13px;font-size:21.5px;color:#3a2a20"><b style="color:#1a1008">Адаптація</b> – зміна методів і способів навчання</div><div style="font-family:'Liberation Serif',serif;color:#2a1c14;white-space:nowrap;position:absolute;left:413px;top:41px;font-size:21.5px;color:#3a2a20">рівня складності завдань з урахуванням</div><div style="font-family:'Liberation Serif',serif;color:#2a1c14;white-space:nowrap;position:absolute;left:413px;top:69px;font-size:21.5px;color:#3a2a20">індивідуальних потреб, без зміни загального</div><div style="font-family:'Liberation Serif',serif;color:#2a1c14;white-space:nowrap;position:absolute;left:413px;top:97px;font-size:21.5px;color:#3a2a20">обсягу навчального навантаження та очікуваних</div><div style="font-family:'Liberation Serif',serif;color:#2a1c14;white-space:nowrap;position:absolute;left:413px;top:125px;font-size:21.5px;color:#3a2a20">результатів.</div><div style="font-family:'Liberation Serif',serif;color:#2a1c14;white-space:nowrap;position:absolute;left:26px;top:158px;font-size:24px;color:#1a1410"><b>знижується загальний</b></div><div style="font-family:'Liberation Serif',serif;color:#2a1c14;white-space:nowrap;position:absolute;left:26px;top:191px;font-size:24px;color:#1a1410"><b>обсяг навчального</b></div><div style="font-family:'Liberation Serif',serif;color:#2a1c14;white-space:nowrap;position:absolute;left:26px;top:224px;font-size:24px;color:#1a1410"><b>навантаження</b> для</div><div style="font-family:'Liberation Serif',serif;color:#2a1c14;white-space:nowrap;position:absolute;left:26px;top:257px;font-size:24px;color:#1a1410">конкретної дитини;</div><div style="font-family:'Liberation Serif',serif;color:#2a1c14;white-space:nowrap;position:absolute;left:26px;top:290px;font-size:24px;color:#1a1410"><b>інші очікувані</b></div><div style="font-family:'Liberation Serif',serif;color:#2a1c14;white-space:nowrap;position:absolute;left:26px;top:323px;font-size:24px;color:#1a1410"><b>результати навчання</b></div><div style="font-family:'Liberation Serif',serif;color:#2a1c14;white-space:nowrap;position:absolute;left:355px;top:161.0px;font-size:21.5px;color:#3a2a20"><b style="color:#1a1008">пристосування середовища</b></div><div style="font-family:'Liberation Serif',serif;color:#2a1c14;white-space:nowrap;position:absolute;left:355px;top:189.5px;font-size:21.5px;color:#3a2a20">(зменшення рівня шуму в класі,</div><div style="font-family:'Liberation Serif',serif;color:#2a1c14;white-space:nowrap;position:absolute;left:355px;top:218.0px;font-size:21.5px;color:#3a2a20">збільшення освітлення, потреба в усамітненні)</div><div style="font-family:'Liberation Serif',serif;color:#2a1c14;white-space:nowrap;position:absolute;left:376px;top:253px;font-size:21.5px;color:#3a2a20"><b style="color:#1a1008">психолого-педагогічні адаптації</b></div><div style="font-family:'Liberation Serif',serif;color:#2a1c14;white-space:nowrap;position:absolute;left:376px;top:281px;font-size:21.5px;color:#3a2a20">(використання візуального розкладу, збільшення часу</div><div style="font-family:'Liberation Serif',serif;color:#2a1c14;white-space:nowrap;position:absolute;left:376px;top:309px;font-size:21.5px;color:#3a2a20">для виконання завдань, обсягу діяльності,</div><div style="font-family:'Liberation Serif',serif;color:#2a1c14;white-space:nowrap;position:absolute;left:376px;top:337px;font-size:21.5px;color:#3a2a20">використання заохочень)</div><div style="font-family:'Liberation Serif',serif;color:#2a1c14;white-space:nowrap;position:absolute;left:423px;top:372px;font-size:21.5px;color:#3a2a20"><b style="color:#1a1008">адаптація навчального матеріалу</b></div><div style="font-family:'Liberation Serif',serif;color:#2a1c14;white-space:nowrap;position:absolute;left:423px;top:400px;font-size:21.5px;color:#3a2a20">(використання друкованих текстів з різним</div><div style="font-family:'Liberation Serif',serif;color:#2a1c14;white-space:nowrap;position:absolute;left:423px;top:428px;font-size:21.5px;color:#3a2a20">розміром, картки-інструкції,</div><div style="font-family:'Liberation Serif',serif;color:#2a1c14;white-space:nowrap;position:absolute;left:423px;top:456px;font-size:21.5px;color:#3a2a20">картки-підказки, засоби додаткової</div><div style="font-family:'Liberation Serif',serif;color:#2a1c14;white-space:nowrap;position:absolute;left:423px;top:484px;font-size:21.5px;color:#3a2a20">документації)</div><div style="position:absolute;left:9px;top:380px;width:330px;height:150px"><div style="position:absolute;left:96px;top:-4px;width:68px;height:68px;border-radius:50%;border:15px dotted #f0c020;box-shadow:inset 0 0 0 10px #f0c020"></div><div style="position:absolute;left:46px;top:36px;width:44px;height:44px;border-radius:50%;border:10px dotted #f08a30;box-shadow:inset 0 0 0 7px #f08a30"></div><div style="position:absolute;left:162px;top:40px;width:56px;height:56px;border-radius:50%;border:13px dotted #3a8ed8;box-shadow:inset 0 0 0 8px #3a8ed8"></div><div style="position:absolute;left:221px;top:21px;width:48px;height:48px;border-radius:50%;border:11px dotted #d8342a;box-shadow:inset 0 0 0 7px #d8342a"></div><div style="position:absolute;left:272px;top:14px;width:56px;height:56px;border-radius:50%;border:13px dotted #6ab040;box-shadow:inset 0 0 0 8px #6ab040"></div><div style="position:absolute;left:10px;top:50px;width:40px;height:90px;transform:rotate(0deg)"><div style="position:absolute;left:12px;top:0;width:16px;height:16px;border-radius:50%;background:#8cc63e"></div><div style="position:absolute;left:10px;top:16px;width:20px;height:40px;border-radius:8px;background:#8cc63e"></div><div style="position:absolute;left:8px;top:52px;width:8px;height:38px;border-radius:4px;background:#8cc63e;transform:rotate(12deg)"></div><div style="position:absolute;left:24px;top:52px;width:8px;height:38px;border-radius:4px;background:#8cc63e;transform:rotate(-12deg)"></div><div style="position:absolute;left:-4px;top:10px;width:8px;height:34px;border-radius:4px;background:#8cc63e;transform:rotate(-30deg)"></div><div style="position:absolute;left:34px;top:10px;width:8px;height:34px;border-radius:4px;background:#8cc63e;transform:rotate(30deg)"></div></div><div style="position:absolute;left:160px;top:60px;width:40px;height:90px;transform:rotate(0deg)"><div style="position:absolute;left:12px;top:0;width:16px;height:16px;border-radius:50%;background:#f5a820"></div><div style="position:absolute;left:10px;top:16px;width:20px;height:40px;border-radius:8px;background:#f5a820"></div><div style="position:absolute;left:8px;top:52px;width:8px;height:38px;border-radius:4px;background:#f5a820;transform:rotate(12deg)"></div><div style="position:absolute;left:24px;top:52px;width:8px;height:38px;border-radius:4px;background:#f5a820;transform:rotate(-12deg)"></div><div style="position:absolute;left:-4px;top:10px;width:8px;height:34px;border-radius:4px;background:#f5a820;transform:rotate(-30deg)"></div><div style="position:absolute;left:34px;top:10px;width:8px;height:34px;border-radius:4px;background:#f5a820;transform:rotate(30deg)"></div></div><div style="position:absolute;left:270px;top:55px;width:40px;height:90px;transform:rotate(-10deg)"><div style="position:absolute;left:12px;top:0;width:16px;height:16px;border-radius:50%;background:#2f7fd0"></div><div style="position:absolute;left:10px;top:16px;width:20px;height:40px;border-radius:8px;background:#2f7fd0"></div><div style="position:absolute;left:8px;top:52px;width:8px;height:38px;border-radius:4px;background:#2f7fd0;transform:rotate(12deg)"></div><div style="position:absolute;left:24px;top:52px;width:8px;height:38px;border-radius:4px;background:#2f7fd0;transform:rotate(-12deg)"></div><div style="position:absolute;left:-4px;top:10px;width:8px;height:34px;border-radius:4px;background:#2f7fd0;transform:rotate(-30deg)"></div><div style="position:absolute;left:34px;top:10px;width:8px;height:34px;border-radius:4px;background:#2f7fd0;transform:rotate(30deg)"></div></div></div></div></div>
<div class="a" style="left:31.5px;top:211.5px;width:208.5px;height:117px;border-radius:4px;box-shadow:0 1px 2px rgba(0,0,0,.25)"></div>
<div class="a" style="left:31.5px;top:211.5px;width:208.5px;height:117px;border-radius:3px;overflow:hidden;background:#e0b38b"><div style="position:absolute;left:0;top:0;width:973px;height:548px;transform:scale(0.21429);transform-origin:0 0"><div style="font-family:'Liberation Serif',serif;color:#2a1c14;white-space:nowrap;position:absolute;left:82px;top:48.0px;font-size:26.5px;color:#2a1c14">·<b>Психолого-педагогічні послуги</b> - це комплексна система заходів з</div><div style="font-family:'Liberation Serif',serif;color:#2a1c14;white-space:nowrap;position:absolute;left:82px;top:79.9px;font-size:26.5px;color:#2a1c14"><u>організації освітнього процесу</u> та розвитку особи з особливими</div><div style="font-family:'Liberation Serif',serif;color:#2a1c14;white-space:nowrap;position:absolute;left:82px;top:111.8px;font-size:26.5px;color:#2a1c14">освітніми потребами, що <u>здійснюється індивідуальною програмою</u></div><div style="font-family:'Liberation Serif',serif;color:#2a1c14;white-space:nowrap;position:absolute;left:82px;top:143.7px;font-size:26.5px;color:#2a1c14"><u>розвитку</u> та надаються педагогічними працівниками закладів освіти,</div><div style="font-family:'Liberation Serif',serif;color:#2a1c14;white-space:nowrap;position:absolute;left:82px;top:175.6px;font-size:26.5px;color:#2a1c14">реабілітаційних установ системи охорони здоров'я, соціального захисту,</div><div style="font-family:'Liberation Serif',serif;color:#2a1c14;white-space:nowrap;position:absolute;left:82px;top:207.5px;font-size:26.5px;color:#2a1c14">фахівцями інклюзивно-ресурсного центру.</div><div style="font-family:'Liberation Serif',serif;color:#2a1c14;white-space:nowrap;position:absolute;left:82px;top:239.39999999999998px;font-size:26.5px;color:#2a1c14">·<b>Корекційно-розвиткові послуги</b> (заняття) - це комплексна система</div><div style="font-family:'Liberation Serif',serif;color:#2a1c14;white-space:nowrap;position:absolute;left:82px;top:271.29999999999995px;font-size:26.5px;color:#2a1c14">заходів супроводження особи з особливими освітніми потребами у</div><div style="font-family:'Liberation Serif',serif;color:#2a1c14;white-space:nowrap;position:absolute;left:82px;top:303.2px;font-size:26.5px;color:#2a1c14">процесі навчання, що спрямовані на <u>корекцію порушень шляхом</u></div><div style="font-family:'Liberation Serif',serif;color:#2a1c14;white-space:nowrap;position:absolute;left:82px;top:335.09999999999997px;font-size:26.5px;color:#2a1c14"><u>розвитку особистості її пізнавальної діяльності, емоційно-вольової</u></div><div style="font-family:'Liberation Serif',serif;color:#2a1c14;white-space:nowrap;position:absolute;left:82px;top:367.0px;font-size:26.5px;color:#2a1c14"><u>сфери та мовлення.</u></div><div style="font-family:'Liberation Serif',serif;color:#2a1c14;white-space:nowrap;position:absolute;left:82px;top:398.9px;font-size:26.5px;color:#2a1c14">*<u>психолого-педагогічні та корекційно-розвиткові заняття не</u></div><div style="font-family:'Liberation Serif',serif;color:#2a1c14;white-space:nowrap;position:absolute;left:82px;top:430.79999999999995px;font-size:26.5px;color:#2a1c14"><u>враховуються під час визначення гранично допустимого навантаження</u></div><div style="font-family:'Liberation Serif',serif;color:#2a1c14;white-space:nowrap;position:absolute;left:82px;top:462.7px;font-size:26.5px;color:#2a1c14"><u>учнів</u></div></div></div>
<div class="a" style="left:28.6px;top:344.5px;width:214px;height:123px;border:3px solid #7c1022;border-radius:6px;background:#e0b38b"></div>
<div class="a" style="left:31.5px;top:347.5px;width:208.5px;height:117px;border-radius:3px;overflow:hidden;background:#e0b38b"><div style="position:absolute;left:0;top:0;width:973px;height:548px;transform:scale(0.21429);transform-origin:0 0"><div style="position:absolute;left:0;top:0;width:973px;height:548px;background:#e0b38b;overflow:hidden">
<div style="position:absolute;left:0;width:308px;text-align:center;font-family:'Liberation Sans',sans-serif;font-style:italic;font-weight:bold;font-size:29px;line-height:32px;color:#3a0c18;white-space:nowrap;transform:scaleX(0.9);transform-origin:154px 0;top:47.5px;word-spacing:12px">Основні поняття</div>
<div style="position:absolute;left:0;width:308px;text-align:center;font-family:'Liberation Sans',sans-serif;font-style:italic;font-weight:bold;font-size:29px;line-height:32px;color:#3a0c18;white-space:nowrap;transform:scaleX(0.9);transform-origin:154px 0;top:79.0px;word-spacing:0px">інклюзивної</div>
<div style="position:absolute;left:0;width:308px;text-align:center;font-family:'Liberation Sans',sans-serif;font-style:italic;font-weight:bold;font-size:29px;line-height:32px;color:#3a0c18;white-space:nowrap;transform:scaleX(0.9);transform-origin:154px 0;top:110.5px;word-spacing:0px">освіти</div>
<div style="position:absolute;left:321px;top:27.50px;font-family:'Liberation Serif',serif;font-size:26.93px;line-height:30px;white-space:nowrap;color:#0d0a08"><b style="color:#a3133f">Особа з особливими освітніми потребами</b> –</div>
<div style="position:absolute;left:321px;top:62.13px;font-family:'Liberation Serif',serif;font-size:26.93px;line-height:30px;white-space:nowrap;color:#0d0a08">особа, яка потребує додаткової постійної</div>
<div style="position:absolute;left:321px;top:96.76px;font-family:'Liberation Serif',serif;font-size:26.93px;line-height:30px;white-space:nowrap;color:#0d0a08">чи тимчасової підтримки в освітньому процесі</div>
<div style="position:absolute;left:321px;top:131.39px;font-family:'Liberation Serif',serif;font-size:26.93px;line-height:30px;white-space:nowrap;color:#0d0a08">з метою забезпечення її права на освіту.</div>
<div style="position:absolute;left:541px;top:176.6px;font-family:'Liberation Serif',serif;font-size:26.93px;line-height:30px;white-space:nowrap;color:#0d0a08;font-style:italic">Ст.1 Закону України «Про освіту»</div>
<div style="position:absolute;left:37.6px;top:233.90px;font-family:'Liberation Serif',serif;font-size:26.93px;line-height:30px;white-space:nowrap;color:#0d0a08"><b style="color:#a3133f">Підтримка в освітньому процесі</b> – підтримка,</div>
<div style="position:absolute;left:37.6px;top:268.53px;font-family:'Liberation Serif',serif;font-size:26.93px;line-height:30px;white-space:nowrap;color:#0d0a08">що надається здобувачам освіти постійно</div>
<div style="position:absolute;left:37.6px;top:303.16px;font-family:'Liberation Serif',serif;font-size:26.93px;line-height:30px;white-space:nowrap;color:#0d0a08">або тимчасово та передбачає створення для них</div>
<div style="position:absolute;left:37.6px;top:337.79px;font-family:'Liberation Serif',serif;font-size:26.93px;line-height:30px;white-space:nowrap;color:#0d0a08">сприятливих для навчання умов у закладі освіти,</div>
<div style="position:absolute;left:37.6px;top:372.42px;font-family:'Liberation Serif',serif;font-size:26.93px;line-height:30px;white-space:nowrap;color:#0d0a08">а також здійснення додаткових заходів,</div>
<div style="position:absolute;left:37.6px;top:407.05px;font-family:'Liberation Serif',serif;font-size:26.93px;line-height:30px;white-space:nowrap;color:#0d0a08">спрямованих на подолання їх освітніх труднощів,</div>
<div style="position:absolute;left:37.6px;top:441.68px;font-family:'Liberation Serif',serif;font-size:26.93px;line-height:30px;white-space:nowrap;color:#0d0a08">у <span style="text-decoration:underline wavy #e0403a;text-decoration-thickness:1px;text-underline-offset:2px">т.ч.</span> тих, <span style="text-decoration:underline wavy #e0403a;text-decoration-thickness:1px;text-underline-offset:2px">що виникли внаслідок психологічної травми.</span></div>
<div style="position:absolute;left:279px;top:487.4px;font-family:'Liberation Serif',serif;font-size:26.93px;line-height:30px;white-space:nowrap;color:#0d0a08;font-style:italic">Постанова КМУ від 21.07.2021 № 765</div>
<div style="position:absolute;left:0;top:527px;width:973px;height:21px;background:#7030a0"></div>
<div style="position:absolute;left:731px;top:239px;width:207px;height:207px;overflow:hidden"><svg width="207" height="207" viewBox="0 0 207 207" style="position:absolute;left:0;top:0">
<rect width="207" height="207" fill="#cfcfd1"/>
<path d="M0 63 L10 68 L40 84 L62 84 L76 76 L110 67 L110 207 L0 207z" fill="#52d496" stroke="#161616" stroke-width="1.2" stroke-linejoin="round" stroke-linecap="round"/>
<path d="M90 207 L90 150 L84 110 L124 100 L187 95 L187 51 Q197 49 207 51 L207 207z" fill="#f0aa72" stroke="#161616" stroke-width="1.2" stroke-linejoin="round" stroke-linecap="round"/>
<path d="M187 95 L187 152" stroke="#161616" stroke-width="1.1"/>
<path d="M3 110 Q4 104 12 105 Q40 104 78 112 Q80 119 74 121 Q40 116 6 118z" fill="#2a2626"/>
<path d="M5 113 L14 175 M80 118 L77 176" stroke="#161616" stroke-width="1.1" fill="none"/>
<path d="M31 86 L60 86 L61 117 Q46 113 31 112z" fill="#fff" stroke="#161616" stroke-width="1.2" stroke-linejoin="round" stroke-linecap="round"/>
<path d="M10 50 Q6 20 30 10 Q60 2 80 20 Q92 36 88 56 Q80 64 66 64 L20 64 Q10 60 10 50z" fill="#221f1f"/>
<path d="M27 14 Q30 6 38 3 M34 12 Q32 8 26 8" stroke="#221f1f" stroke-width="1.8" fill="none"/>
<path d="M53 56 Q60 52 68 58 Q74 66 72 74 L78 82 Q76 90 68 92 Q60 90 54 84z" fill="#fff" stroke="#161616" stroke-width="1.2" stroke-linejoin="round" stroke-linecap="round"/>
<ellipse cx="62" cy="71" rx="2.6" ry="2" fill="#161616"/>
<path d="M9 86 Q6 60 10 46 Q13 42 17 44 Q20 42 24 44 Q28 42 32 45 Q38 44 42 47 Q56 50 56 64 L56 76 Q56 90 40 92 L20 92 Q10 92 9 86z" fill="#fff" stroke="#161616" stroke-width="1.2" stroke-linejoin="round" stroke-linecap="round"/>
<path d="M18 46 L17 68 M25 46 L24 70 M33 47 L33 70" stroke="#161616" stroke-width="1" fill="none"/>
<path d="M82 108 Q96 100 112 104 Q130 108 144 140 Q150 160 146 168 Q140 172 128 170 L94 166 Q86 160 86 140z" fill="#f0aa72" stroke="#161616" stroke-width="1.2" stroke-linejoin="round" stroke-linecap="round"/>
<path d="M124 124 Q142 134 146 152 Q144 160 134 156 L124 150z" fill="#2a2626"/>
<path d="M98 94 L124 94 L124 150 Q110 130 98 128z" fill="#fff" stroke="#161616" stroke-width="1.2" stroke-linejoin="round" stroke-linecap="round"/>
<path d="M88 150 Q110 158 134 160 M92 160 Q116 166 140 166" stroke="#161616" stroke-width="1" fill="none"/>
<path d="M88 62 Q86 44 94 42 Q99 42 100 48 Q101 40 108 40 Q114 41 115 50 L118 56 L119 24 Q120 20 125 20 Q131 20 131 26 L132 68 Q136 78 134 88 Q128 96 110 96 L100 96 Q90 92 88 80z" fill="#fff" stroke="#161616" stroke-width="1.2" stroke-linejoin="round" stroke-linecap="round"/>
<path d="M94 48 L94 64 M107 46 L107 64 M92 66 Q104 70 118 78" stroke="#161616" stroke-width="1" fill="none"/>
<path d="M131 62 Q130 22 164 20 Q196 20 197 56 L196 72 L140 72 Q131 70 131 62z" fill="#221f1f"/>
<path d="M159 18 Q156 4 172 3 Q190 3 196 9 Q202 12 204 9 Q204 18 192 19 Q176 18 168 22z" fill="#221f1f"/>
<path d="M140 66 L160 64 L168 56 L172 66 L186 66 L186 94 Q164 100 142 96z" fill="#fff" stroke="#161616" stroke-width="1.2" stroke-linejoin="round" stroke-linecap="round"/>
<circle cx="151" cy="81" r="10" fill="#fff" stroke="#161616" stroke-width="2"/>
<circle cx="176" cy="81" r="9" fill="#fff" stroke="#161616" stroke-width="2"/>
<ellipse cx="150" cy="84" rx="3" ry="2.4" fill="#161616"/><ellipse cx="174" cy="84" rx="3" ry="2.4" fill="#161616"/>
<path d="M158 88 L166 88 L163 97z" fill="#fff" stroke="#161616" stroke-width="1.2" stroke-linejoin="round" stroke-linecap="round"/>
<path d="M6 200 Q14 184 26 176 Q34 168 44 168 L86 182 L92 196 Q92 207 84 207 L8 207 Q4 206 6 200z" fill="#fff" stroke="#161616" stroke-width="1.2" stroke-linejoin="round" stroke-linecap="round"/>
<path d="M18 204 L32 178 M30 205 L42 181 M42 206 L52 184" stroke="#161616" stroke-width="1" fill="none"/>
<path d="M122 199 Q124 192 140 190 L160 191 Q174 194 175 200 L175 205 L122 205z" fill="#fff" stroke="#161616" stroke-width="1.2" stroke-linejoin="round" stroke-linecap="round"/>
<path d="M125 201 L131 201" stroke="#888" stroke-width="1.6"/>
<path d="M152 184 L178 154 Q186 150 207 152 L207 199 L188 198 Q176 196 170 190 L156 190 Q150 188 152 184z" fill="#fff" stroke="#161616" stroke-width="1.2" stroke-linejoin="round" stroke-linecap="round"/>
<path d="M170 188 L186 170 M180 196 L194 172 M194 198 L202 176" stroke="#161616" stroke-width="1" fill="none"/>
<path d="M140 179 L143 186 M146 177 L147 185 M134 182 L139 188" stroke="#161616" stroke-width="0.9"/>
</svg></div>
</div></div></div>
<div class="a" style="left:31.5px;top:483.5px;width:208.5px;height:117px;border-radius:4px;box-shadow:0 1px 2px rgba(0,0,0,.25)"></div>
<div class="a" style="left:31.5px;top:483.5px;width:208.5px;height:117px;border-radius:3px;overflow:hidden;background:#e0b38b"><div style="position:absolute;left:0;top:0;width:973px;height:548px;transform:scale(0.21429);transform-origin:0 0"><div style="position:absolute;left:131px;top:28px;font-family:'Liberation Sans';font-style:italic;font-weight:bold;font-size:24px;line-height:28px;color:#2a0a10;transform:scaleX(0.92);transform-origin:0 0">Основні поняття<br>інклюзивної<br>освіти</div><div style="font-family:'Liberation Serif',serif;color:#2a1c14;white-space:nowrap;position:absolute;left:33px;top:161px;font-size:32.4px;color:#4a3424"><b style="color:#1a1008">Здобувачі освіти з особливими освітніми потребами</b> - особи з</div><div style="font-family:'Liberation Serif',serif;color:#2a1c14;white-space:nowrap;position:absolute;left:33px;top:198px;font-size:32.4px;color:#4a3424">особливими освітніми потребами, які здобувають освіту в</div><div style="font-family:'Liberation Serif',serif;color:#2a1c14;white-space:nowrap;position:absolute;left:33px;top:235px;font-size:32.4px;color:#4a3424">закладах вищої освіти;</div><div style="font-family:'Liberation Serif',serif;color:#2a1c14;white-space:nowrap;position:absolute;left:33px;top:312.0px;font-size:32.4px;color:#4a3424"><b style="color:#1a1008">Інклюзивна група</b> - група у закладі вищої освіти, де поряд із</div><div style="font-family:'Liberation Serif',serif;color:#2a1c14;white-space:nowrap;position:absolute;left:33px;top:348.5px;font-size:32.4px;color:#4a3424">іншими здобувачами освіти навчаються одна або більше осіб з</div><div style="font-family:'Liberation Serif',serif;color:#2a1c14;white-space:nowrap;position:absolute;left:33px;top:385.0px;font-size:32.4px;color:#4a3424">особливими освітніми потребами.</div></div></div>
<div class="a" style="left:4px;top:71px;font-size:13.5px;color:#444;white-space:nowrap">10</div>
<div class="a" style="left:4px;top:207px;font-size:13.5px;color:#444;white-space:nowrap">11</div>
<div class="a" style="left:4px;top:343px;font-size:13.5px;color:#c2403a;white-space:nowrap">12</div>
<div class="a" style="left:4px;top:479px;font-size:13.5px;color:#444;white-space:nowrap">13</div>
</div>
<div class="a" style="left:276.0px;top:156.0px;width:1.0px;height:584.0px;background:#d8d8d8"></div>
<svg class="sv" style="left:260px;top:161px" width="11" height="8" viewBox="0 0 11 8"><path d="M5.5 1L10 7H1z" fill="#6a6a6a"/></svg>
<div class="a" style="left:262.0px;top:300.0px;width:7.0px;height:62.0px;background:#6b6b6b;border-radius:4px"></div>
<svg class="sv" style="left:260px;top:728px" width="11" height="8" viewBox="0 0 11 8"><path d="M5.5 7L10 1H1z" fill="#6a6a6a"/></svg>
<div class="a" style="left:352px;top:172px;width:973px;height:548px;box-shadow:0 0 2px rgba(0,0,0,.12)"><div style="position:absolute;left:0;top:0;width:973px;height:548px;background:#e0b38b;overflow:hidden">
<div style="position:absolute;left:0;width:308px;text-align:center;font-family:'Liberation Sans',sans-serif;font-style:italic;font-weight:bold;font-size:29px;line-height:32px;color:#3a0c18;white-space:nowrap;transform:scaleX(0.9);transform-origin:154px 0;top:47.5px;word-spacing:12px">Основні поняття</div>
<div style="position:absolute;left:0;width:308px;text-align:center;font-family:'Liberation Sans',sans-serif;font-style:italic;font-weight:bold;font-size:29px;line-height:32px;color:#3a0c18;white-space:nowrap;transform:scaleX(0.9);transform-origin:154px 0;top:79.0px;word-spacing:0px">інклюзивної</div>
<div style="position:absolute;left:0;width:308px;text-align:center;font-family:'Liberation Sans',sans-serif;font-style:italic;font-weight:bold;font-size:29px;line-height:32px;color:#3a0c18;white-space:nowrap;transform:scaleX(0.9);transform-origin:154px 0;top:110.5px;word-spacing:0px">освіти</div>
<div style="position:absolute;left:321px;top:27.50px;font-family:'Liberation Serif',serif;font-size:26.93px;line-height:30px;white-space:nowrap;color:#0d0a08"><b style="color:#a3133f">Особа з особливими освітніми потребами</b> –</div>
<div style="position:absolute;left:321px;top:62.13px;font-family:'Liberation Serif',serif;font-size:26.93px;line-height:30px;white-space:nowrap;color:#0d0a08">особа, яка потребує додаткової постійної</div>
<div style="position:absolute;left:321px;top:96.76px;font-family:'Liberation Serif',serif;font-size:26.93px;line-height:30px;white-space:nowrap;color:#0d0a08">чи тимчасової підтримки в освітньому процесі</div>
<div style="position:absolute;left:321px;top:131.39px;font-family:'Liberation Serif',serif;font-size:26.93px;line-height:30px;white-space:nowrap;color:#0d0a08">з метою забезпечення її права на освіту.</div>
<div style="position:absolute;left:541px;top:176.6px;font-family:'Liberation Serif',serif;font-size:26.93px;line-height:30px;white-space:nowrap;color:#0d0a08;font-style:italic">Ст.1 Закону України «Про освіту»</div>
<div style="position:absolute;left:37.6px;top:233.90px;font-family:'Liberation Serif',serif;font-size:26.93px;line-height:30px;white-space:nowrap;color:#0d0a08"><b style="color:#a3133f">Підтримка в освітньому процесі</b> – підтримка,</div>
<div style="position:absolute;left:37.6px;top:268.53px;font-family:'Liberation Serif',serif;font-size:26.93px;line-height:30px;white-space:nowrap;color:#0d0a08">що надається здобувачам освіти постійно</div>
<div style="position:absolute;left:37.6px;top:303.16px;font-family:'Liberation Serif',serif;font-size:26.93px;line-height:30px;white-space:nowrap;color:#0d0a08">або тимчасово та передбачає створення для них</div>
<div style="position:absolute;left:37.6px;top:337.79px;font-family:'Liberation Serif',serif;font-size:26.93px;line-height:30px;white-space:nowrap;color:#0d0a08">сприятливих для навчання умов у закладі освіти,</div>
<div style="position:absolute;left:37.6px;top:372.42px;font-family:'Liberation Serif',serif;font-size:26.93px;line-height:30px;white-space:nowrap;color:#0d0a08">а також здійснення додаткових заходів,</div>
<div style="position:absolute;left:37.6px;top:407.05px;font-family:'Liberation Serif',serif;font-size:26.93px;line-height:30px;white-space:nowrap;color:#0d0a08">спрямованих на подолання їх освітніх труднощів,</div>
<div style="position:absolute;left:37.6px;top:441.68px;font-family:'Liberation Serif',serif;font-size:26.93px;line-height:30px;white-space:nowrap;color:#0d0a08">у <span style="text-decoration:underline wavy #e0403a;text-decoration-thickness:1px;text-underline-offset:2px">т.ч.</span> тих, <span style="text-decoration:underline wavy #e0403a;text-decoration-thickness:1px;text-underline-offset:2px">що виникли внаслідок психологічної травми.</span></div>
<div style="position:absolute;left:279px;top:487.4px;font-family:'Liberation Serif',serif;font-size:26.93px;line-height:30px;white-space:nowrap;color:#0d0a08;font-style:italic">Постанова КМУ від 21.07.2021 № 765</div>
<div style="position:absolute;left:0;top:527px;width:973px;height:21px;background:#7030a0"></div>
<div style="position:absolute;left:731px;top:239px;width:207px;height:207px;overflow:hidden"><svg width="207" height="207" viewBox="0 0 207 207" style="position:absolute;left:0;top:0">
<rect width="207" height="207" fill="#cfcfd1"/>
<path d="M0 63 L10 68 L40 84 L62 84 L76 76 L110 67 L110 207 L0 207z" fill="#52d496" stroke="#161616" stroke-width="1.2" stroke-linejoin="round" stroke-linecap="round"/>
<path d="M90 207 L90 150 L84 110 L124 100 L187 95 L187 51 Q197 49 207 51 L207 207z" fill="#f0aa72" stroke="#161616" stroke-width="1.2" stroke-linejoin="round" stroke-linecap="round"/>
<path d="M187 95 L187 152" stroke="#161616" stroke-width="1.1"/>
<path d="M3 110 Q4 104 12 105 Q40 104 78 112 Q80 119 74 121 Q40 116 6 118z" fill="#2a2626"/>
<path d="M5 113 L14 175 M80 118 L77 176" stroke="#161616" stroke-width="1.1" fill="none"/>
<path d="M31 86 L60 86 L61 117 Q46 113 31 112z" fill="#fff" stroke="#161616" stroke-width="1.2" stroke-linejoin="round" stroke-linecap="round"/>
<path d="M10 50 Q6 20 30 10 Q60 2 80 20 Q92 36 88 56 Q80 64 66 64 L20 64 Q10 60 10 50z" fill="#221f1f"/>
<path d="M27 14 Q30 6 38 3 M34 12 Q32 8 26 8" stroke="#221f1f" stroke-width="1.8" fill="none"/>
<path d="M53 56 Q60 52 68 58 Q74 66 72 74 L78 82 Q76 90 68 92 Q60 90 54 84z" fill="#fff" stroke="#161616" stroke-width="1.2" stroke-linejoin="round" stroke-linecap="round"/>
<ellipse cx="62" cy="71" rx="2.6" ry="2" fill="#161616"/>
<path d="M9 86 Q6 60 10 46 Q13 42 17 44 Q20 42 24 44 Q28 42 32 45 Q38 44 42 47 Q56 50 56 64 L56 76 Q56 90 40 92 L20 92 Q10 92 9 86z" fill="#fff" stroke="#161616" stroke-width="1.2" stroke-linejoin="round" stroke-linecap="round"/>
<path d="M18 46 L17 68 M25 46 L24 70 M33 47 L33 70" stroke="#161616" stroke-width="1" fill="none"/>
<path d="M82 108 Q96 100 112 104 Q130 108 144 140 Q150 160 146 168 Q140 172 128 170 L94 166 Q86 160 86 140z" fill="#f0aa72" stroke="#161616" stroke-width="1.2" stroke-linejoin="round" stroke-linecap="round"/>
<path d="M124 124 Q142 134 146 152 Q144 160 134 156 L124 150z" fill="#2a2626"/>
<path d="M98 94 L124 94 L124 150 Q110 130 98 128z" fill="#fff" stroke="#161616" stroke-width="1.2" stroke-linejoin="round" stroke-linecap="round"/>
<path d="M88 150 Q110 158 134 160 M92 160 Q116 166 140 166" stroke="#161616" stroke-width="1" fill="none"/>
<path d="M88 62 Q86 44 94 42 Q99 42 100 48 Q101 40 108 40 Q114 41 115 50 L118 56 L119 24 Q120 20 125 20 Q131 20 131 26 L132 68 Q136 78 134 88 Q128 96 110 96 L100 96 Q90 92 88 80z" fill="#fff" stroke="#161616" stroke-width="1.2" stroke-linejoin="round" stroke-linecap="round"/>
<path d="M94 48 L94 64 M107 46 L107 64 M92 66 Q104 70 118 78" stroke="#161616" stroke-width="1" fill="none"/>
<path d="M131 62 Q130 22 164 20 Q196 20 197 56 L196 72 L140 72 Q131 70 131 62z" fill="#221f1f"/>
<path d="M159 18 Q156 4 172 3 Q190 3 196 9 Q202 12 204 9 Q204 18 192 19 Q176 18 168 22z" fill="#221f1f"/>
<path d="M140 66 L160 64 L168 56 L172 66 L186 66 L186 94 Q164 100 142 96z" fill="#fff" stroke="#161616" stroke-width="1.2" stroke-linejoin="round" stroke-linecap="round"/>
<circle cx="151" cy="81" r="10" fill="#fff" stroke="#161616" stroke-width="2"/>
<circle cx="176" cy="81" r="9" fill="#fff" stroke="#161616" stroke-width="2"/>
<ellipse cx="150" cy="84" rx="3" ry="2.4" fill="#161616"/><ellipse cx="174" cy="84" rx="3" ry="2.4" fill="#161616"/>
<path d="M158 88 L166 88 L163 97z" fill="#fff" stroke="#161616" stroke-width="1.2" stroke-linejoin="round" stroke-linecap="round"/>
<path d="M6 200 Q14 184 26 176 Q34 168 44 168 L86 182 L92 196 Q92 207 84 207 L8 207 Q4 206 6 200z" fill="#fff" stroke="#161616" stroke-width="1.2" stroke-linejoin="round" stroke-linecap="round"/>
<path d="M18 204 L32 178 M30 205 L42 181 M42 206 L52 184" stroke="#161616" stroke-width="1" fill="none"/>
<path d="M122 199 Q124 192 140 190 L160 191 Q174 194 175 200 L175 205 L122 205z" fill="#fff" stroke="#161616" stroke-width="1.2" stroke-linejoin="round" stroke-linecap="round"/>
<path d="M125 201 L131 201" stroke="#888" stroke-width="1.6"/>
<path d="M152 184 L178 154 Q186 150 207 152 L207 199 L188 198 Q176 196 170 190 L156 190 Q150 188 152 184z" fill="#fff" stroke="#161616" stroke-width="1.2" stroke-linejoin="round" stroke-linecap="round"/>
<path d="M170 188 L186 170 M180 196 L194 172 M194 198 L202 176" stroke="#161616" stroke-width="1" fill="none"/>
<path d="M140 179 L143 186 M146 177 L147 185 M134 182 L139 188" stroke="#161616" stroke-width="0.9"/>
</svg></div>
<svg style="position:absolute;left:407px;top:364px" width="7" height="18" viewBox="0 0 7 18"><path d="M1 1h5M3.5 1v16M1 17h5" stroke="#555" stroke-width="1.2"/></svg>
</div></div>
<svg class="sv" style="left:1401px;top:161px" width="11" height="8" viewBox="0 0 11 8"><path d="M5.5 1L10 7H1z" fill="#6a6a6a"/></svg>
<div class="a" style="left:1403.0px;top:321.6px;width:7.0px;height:15.5px;background:#6b6b6b;border-radius:4px"></div>
<svg class="sv" style="left:1401px;top:677px" width="11" height="40" viewBox="0 0 11 40"><path d="M5.5 8L10 2H1z" fill="#6a6a6a"/><path d="M5.5 15L10 21H1zM5.5 10L10 16H1z" fill="#6a6a6a"/><path d="M5.5 37L10 31H1zM5.5 32L10 26H1z" fill="#6a6a6a"/></svg>
<div class="a" style="left:277.0px;top:738.0px;width:1137.0px;height:1.0px;background:#dcdcdc"></div>
<div class="a" style="left:0.0px;top:740.0px;width:1414.0px;height:20.0px;background:#f3f3f5"></div>
<div class="a rt" style="left:11.0px;top:746.1px;font-size:9.5px;color:#444;">Слайд 12 из 37</div>
<svg class="sv" style="left:94px;top:743px" width="15" height="14" viewBox="0 0 15 14"><path d="M1.5 1.5h6v11h-6zM7.5 1.5h5v6" stroke="#444" fill="none"/><path d="M9 9l4 4M13 9l-4 4" stroke="#444"/></svg>
<div class="a rt" style="left:123.0px;top:745.6px;font-size:10.3px;color:#444;">украинский</div>
<svg class="sv" style="left:192px;top:742px" width="16" height="16" viewBox="0 0 16 16"><circle cx="7" cy="2.5" r="1.8" fill="none" stroke="#444"/><path d="M1.5 5.5l5.5 1.5 5.5-1.5M7 7v3l-3 5M7 10l2 2" stroke="#444" fill="none"/><path d="M10 11l4 4M14 11l-4 4" stroke="#444"/></svg>
<div class="a rt" style="left:209.0px;top:745.4px;font-size:10.6px;color:#1e1e1e;-webkit-text-stroke:0.3px #1e1e1e">Специальные возможности: проверьте рекомендации</div>
<svg class="sv" style="left:926px;top:743px" width="14" height="14" viewBox="0 0 14 14"><path d="M1 6.5h12M1 9.5h12M1 12.5h12M4 4l3-3 3 3" stroke="#444" fill="none"/></svg>
<div class="a rt" style="left:943.0px;top:745.6px;font-size:10.3px;color:#333;">Заметки</div>
<svg class="sv" style="left:998px;top:742px" width="15" height="15" viewBox="0 0 15 15"><path d="M1.5 1.5h12v9h-8l-3 3v-3h-1z" stroke="#444" fill="none"/></svg>
<div class="a rt" style="left:1015.0px;top:745.6px;font-size:10.3px;color:#333;">Примечания</div>
<div class="a" style="left:1092.0px;top:741.0px;width:36.0px;height:18.0px;background:#e2e2e4;border-radius:2px"></div>
<svg class="sv" style="left:1102px;top:744px" width="15" height="13" viewBox="0 0 15 13"><rect x="1" y="1" width="13" height="11" fill="none" stroke="#444"/><rect x="3.5" y="3.5" width="8" height="5" fill="none" stroke="#444"/></svg>
<svg class="sv" style="left:1138px;top:744px" width="14" height="13" viewBox="0 0 14 13"><rect x="1" y="1" width="5" height="4" fill="none" stroke="#444"/><rect x="8" y="1" width="5" height="4" fill="none" stroke="#444"/><rect x="1" y="8" width="5" height="4" fill="none" stroke="#444"/><rect x="8" y="8" width="5" height="4" fill="none" stroke="#444"/></svg>
<svg class="sv" style="left:1173px;top:744px" width="14" height="13" viewBox="0 0 14 13"><path d="M1 1.5h5l1 1 1-1h5v10H8l-1 1-1-1H1z" fill="none" stroke="#444"/><path d="M7 2.5v9M2.5 4h3M2.5 6h3M8.5 4h3M8.5 6h3" stroke="#444"/></svg>
<svg class="sv" style="left:1208px;top:743px" width="14" height="15" viewBox="0 0 14 15"><rect x="1.5" y="1.5" width="11" height="7" fill="none" stroke="#444"/><path d="M7 8.5v5M3.5 13.5h7" stroke="#444"/></svg>
<div class="a" style="left:1239.0px;top:750.0px;width:7.0px;height:1.0px;background:#555"></div>
<div class="a" style="left:1251.0px;top:750.0px;width:88.0px;height:1.0px;background:#888"></div>
<div class="a" style="left:1295.0px;top:745.0px;width:4.0px;height:11.0px;background:#555"></div>
<svg class="sv" style="left:1341px;top:745px" width="11" height="11" viewBox="0 0 11 11"><path d="M5.5 1v9M1 5.5h9" stroke="#555"/></svg>
<div class="a rt" style="left:1362.0px;top:745.6px;font-size:10.3px;color:#444;">115%</div>
<svg class="sv" style="left:1395px;top:742px" width="16" height="17" viewBox="0 0 16 17"><rect x="4.5" y="4.5" width="7" height="8" fill="none" stroke="#444"/><path d="M3 6l-2 2.5 2 2.5M13 6l2 2.5-2 2.5M6 3l2-2 2 2M6 14l2 2 2-2" stroke="#444" fill="none"/></svg>
</div>

<div id="zbar" class="a"></div>
<svg class="sv" style="left:262px;top:896px" width="26" height="24" viewBox="0 0 26 24"><circle cx="7.5" cy="5.5" r="3.6" stroke="#fff" stroke-width="1.7" fill="none" stroke-linecap="round" stroke-linejoin="round"/><path d="M2 21v-3.5a5 5 0 0 1 5-5h2" stroke="#fff" stroke-width="1.7" fill="none" stroke-linecap="round" stroke-linejoin="round"/><circle cx="16.5" cy="9" r="3.6" stroke="#fff" stroke-width="1.7" fill="none" stroke-linecap="round" stroke-linejoin="round"/><path d="M10 22h13v-2.5a5 5 0 0 0-5-5h-3a5 5 0 0 0-5 5z" stroke="#fff" stroke-width="1.7" fill="none" stroke-linecap="round" stroke-linejoin="round"/></svg>
<div class="a" style="left:296px;top:898px;color:#bcbcbc;font-size:13.5px;-webkit-text-stroke:0.4px #bcbcbc">18</div>
<svg class="sv" style="left:336px;top:904px" width="10" height="7" viewBox="0 0 10 7"><path d="M1.5 5.5L5 2l3.5 3.5" stroke="#fff" stroke-width="1.8" fill="none" stroke-linecap="round"/></svg>
<div class="a" style="left:215.3px;top:930.2px;width:120px;text-align:center;color:#fff;font-size:14.4px;line-height:17px;-webkit-text-stroke:0.5px #fff;letter-spacing:0.35px;white-space:nowrap">Participants</div>
<svg class="sv" style="left:397px;top:894px" width="31" height="29" viewBox="0 0 31 29"><path d="M9 6.5V6a4 4 0 0 1 4-4h9a4 4 0 0 1 4 4v8a4 4 0 0 1-3 3.8" stroke="#fff" stroke-width="1.7" fill="none" stroke-linecap="round" stroke-linejoin="round"/><path d="M6 7h10a4 4 0 0 1 4 4v7a4 4 0 0 1-4 4H9.5l-3.5 4v-4.2A4 4 0 0 1 2 18v-7a4 4 0 0 1 4-4z" stroke="#fff" stroke-width="1.7" fill="none" stroke-linecap="round" stroke-linejoin="round"/><circle cx="7.5" cy="14.5" r="1.1" fill="#fff"/><circle cx="11" cy="14.5" r="1.1" fill="#fff"/><circle cx="14.5" cy="14.5" r="1.1" fill="#fff"/></svg>
<svg class="sv" style="left:449px;top:904px" width="10" height="7" viewBox="0 0 10 7"><path d="M1.5 5.5L5 2l3.5 3.5" stroke="#fff" stroke-width="1.8" fill="none" stroke-linecap="round"/></svg>
<div class="a" style="left:353.3px;top:930.2px;width:120px;text-align:center;color:#fff;font-size:14.4px;line-height:17px;-webkit-text-stroke:0.5px #fff;letter-spacing:0.35px;white-space:nowrap">Chat</div>
<svg class="sv" style="left:503px;top:894px" width="34" height="28" viewBox="0 0 34 28"><path d="M3 11.5C1.5 6 6 2 10.5 3.5c2.5.8 4 2.8 5 4.5 1.8-2.5 5-4.5 8.5-3.5 5 1.5 6 7 3 11-3 4-9 7.5-14.5 9.5C8 21 4 16.5 3 11.5z" stroke="#fff" stroke-width="1.7" fill="none" stroke-linecap="round" stroke-linejoin="round"/></svg>
<div class="a" style="left:459.5px;top:930.2px;width:120px;text-align:center;color:#fff;font-size:14.4px;line-height:17px;-webkit-text-stroke:0.5px #fff;letter-spacing:0.35px;white-space:nowrap">React</div>
<svg class="sv" style="left:611px;top:891px" width="27" height="33" viewBox="0 0 27 33"><path d="M5 18V9a2 2 0 0 1 4 0v6V5a2 2 0 0 1 4 0v9V4a2 2 0 0 1 4 0v10V7a2 2 0 0 1 4 0v10l2-3a2 2 0 0 1 3 2.5l-4 7c-2 4-4.5 6-8.5 6h-1C7.5 29.5 5 26 5 22z" stroke="#fff" stroke-width="1.7" fill="none" stroke-linecap="round" stroke-linejoin="round"/></svg>
<svg class="sv" style="left:659px;top:904px" width="10" height="7" viewBox="0 0 10 7"><path d="M1.5 5.5L5 2l3.5 3.5" stroke="#fff" stroke-width="1.8" fill="none" stroke-linecap="round"/></svg>
<div class="a" style="left:564.8px;top:930.2px;width:120px;text-align:center;color:#fff;font-size:14.4px;line-height:17px;-webkit-text-stroke:0.5px #fff;letter-spacing:0.35px;white-space:nowrap">Raise hand</div>
<div class="a" style="left:725.7px;top:896px;width:30px;height:24px;border-radius:4px;background:#10dc80"></div>
<svg class="sv" style="left:733px;top:900px" width="16" height="16" viewBox="0 0 16 16"><path d="M8 13.5V5" stroke="#000" stroke-width="2.6" stroke-linecap="round"/><path d="M3.5 8L8 3.5 12.5 8" stroke="#000" stroke-width="2.6" fill="none" stroke-linecap="round" stroke-linejoin="round"/></svg>
<div class="a" style="left:681.6px;top:930.2px;width:120px;text-align:center;color:#fff;font-size:14.4px;line-height:17px;-webkit-text-stroke:0.5px #fff;letter-spacing:0.35px;white-space:nowrap">Share</div>
<svg class="sv" style="left:845px;top:893px" width="32" height="30" viewBox="0 0 32 30"><defs><linearGradient id="ai" x1="0" y1="0" x2="1" y2="1"><stop offset="0" stop-color="#ffffff"/><stop offset=".5" stop-color="#bfe0f0"/><stop offset="1" stop-color="#8fc0dc"/></linearGradient></defs><path d="M14 3C15 12 17.5 15 27 16.5 17.5 18 15 21 14 30 13 21 10.5 18 1 16.5 10.5 15 13 12 14 3z" fill="url(#ai)"/><path d="M25.5 1.5C26 4.5 27 5.5 30 6 27 6.5 26 7.5 25.5 10.5 25 7.5 24 6.5 21 6 24 5.5 25 4.5 25.5 1.5z" fill="#d8ecf5"/></svg>
<div class="a" style="left:801.0px;top:930.2px;width:120px;text-align:center;color:#fff;font-size:14.4px;line-height:17px;-webkit-text-stroke:0.5px #fff;letter-spacing:0.35px;white-space:nowrap">AI Companion</div>
<svg class="sv" style="left:955px;top:895px" width="30" height="28" viewBox="0 0 30 28"><path d="M2 10V7a5 5 0 0 1 5-5h3M26 17v3a5 5 0 0 1-5 5h-3" stroke="#fff" stroke-width="1.7" fill="none" stroke-linecap="round" stroke-linejoin="round"/><circle cx="20" cy="7.5" r="4.5" stroke="#fff" stroke-width="1.7" fill="none" stroke-linecap="round" stroke-linejoin="round"/><circle cx="7.5" cy="19.5" r="4.5" stroke="#fff" stroke-width="1.7" fill="none" stroke-linecap="round" stroke-linejoin="round"/></svg>
<div class="a" style="left:909.8px;top:930.2px;width:120px;text-align:center;color:#fff;font-size:14.4px;line-height:17px;-webkit-text-stroke:0.5px #fff;letter-spacing:0.35px;white-space:nowrap">Apps</div>
<svg class="sv" style="left:1065px;top:892px" width="31" height="32" viewBox="0 0 31 32"><rect x="5" y="2" width="17" height="24" rx="3" stroke="#fff" stroke-width="1.7" fill="none" stroke-linecap="round" stroke-linejoin="round"/><path d="M10 8h7M10 12h7M10 16h4" stroke="#fff" stroke-width="1.7" fill="none" stroke-linecap="round" stroke-linejoin="round"/><path d="M3.5 6h3M3.5 10h3M3.5 14h3M3.5 18h3M3.5 22h3" stroke="#fff" stroke-width="1.4"/><path d="M14 26.5h12a2.5 2.5 0 0 0 0-5H14l-2.5 2.5z" fill="#fff"/></svg>
<div class="a" style="left:1020.5px;top:930.2px;width:120px;text-align:center;color:#fff;font-size:14.4px;line-height:17px;-webkit-text-stroke:0.5px #fff;letter-spacing:0.35px;white-space:nowrap">Notes</div>
<svg class="sv" style="left:1187px;top:894px" width="33" height="27" viewBox="0 0 33 27"><path d="M6 22H5a3 3 0 0 1-3-3V5a3 3 0 0 1 3-3h22a3 3 0 0 1 3 3v14" stroke="#fff" stroke-width="1.7" fill="none" stroke-linecap="round" stroke-linejoin="round"/><path d="M12 24.5h17a2.5 2.5 0 0 0 0-5H12l-3 2.5z" fill="#fff"/></svg>
<div class="a" style="left:1144.7px;top:930.2px;width:120px;text-align:center;color:#fff;font-size:14.4px;line-height:17px;-webkit-text-stroke:0.5px #fff;letter-spacing:0.35px;white-space:nowrap">Whiteboards</div>
<svg class="sv" style="left:1300px;top:892px" width="34" height="33" viewBox="0 0 34 33"><circle cx="16.8" cy="16.5" r="14.5" stroke="#fff" stroke-width="1.7" fill="none" stroke-linecap="round" stroke-linejoin="round"/><circle cx="10.5" cy="16.5" r="1.8" fill="#fff"/><circle cx="16.8" cy="16.5" r="1.8" fill="#fff"/><circle cx="23.1" cy="16.5" r="1.8" fill="#fff"/></svg>
<div class="a" style="left:1256.4px;top:930.2px;width:120px;text-align:center;color:#fff;font-size:14.4px;line-height:17px;-webkit-text-stroke:0.5px #fff;letter-spacing:0.35px;white-space:nowrap">More</div>
<div id="zstrip" class="a"></div>
</body></html>
